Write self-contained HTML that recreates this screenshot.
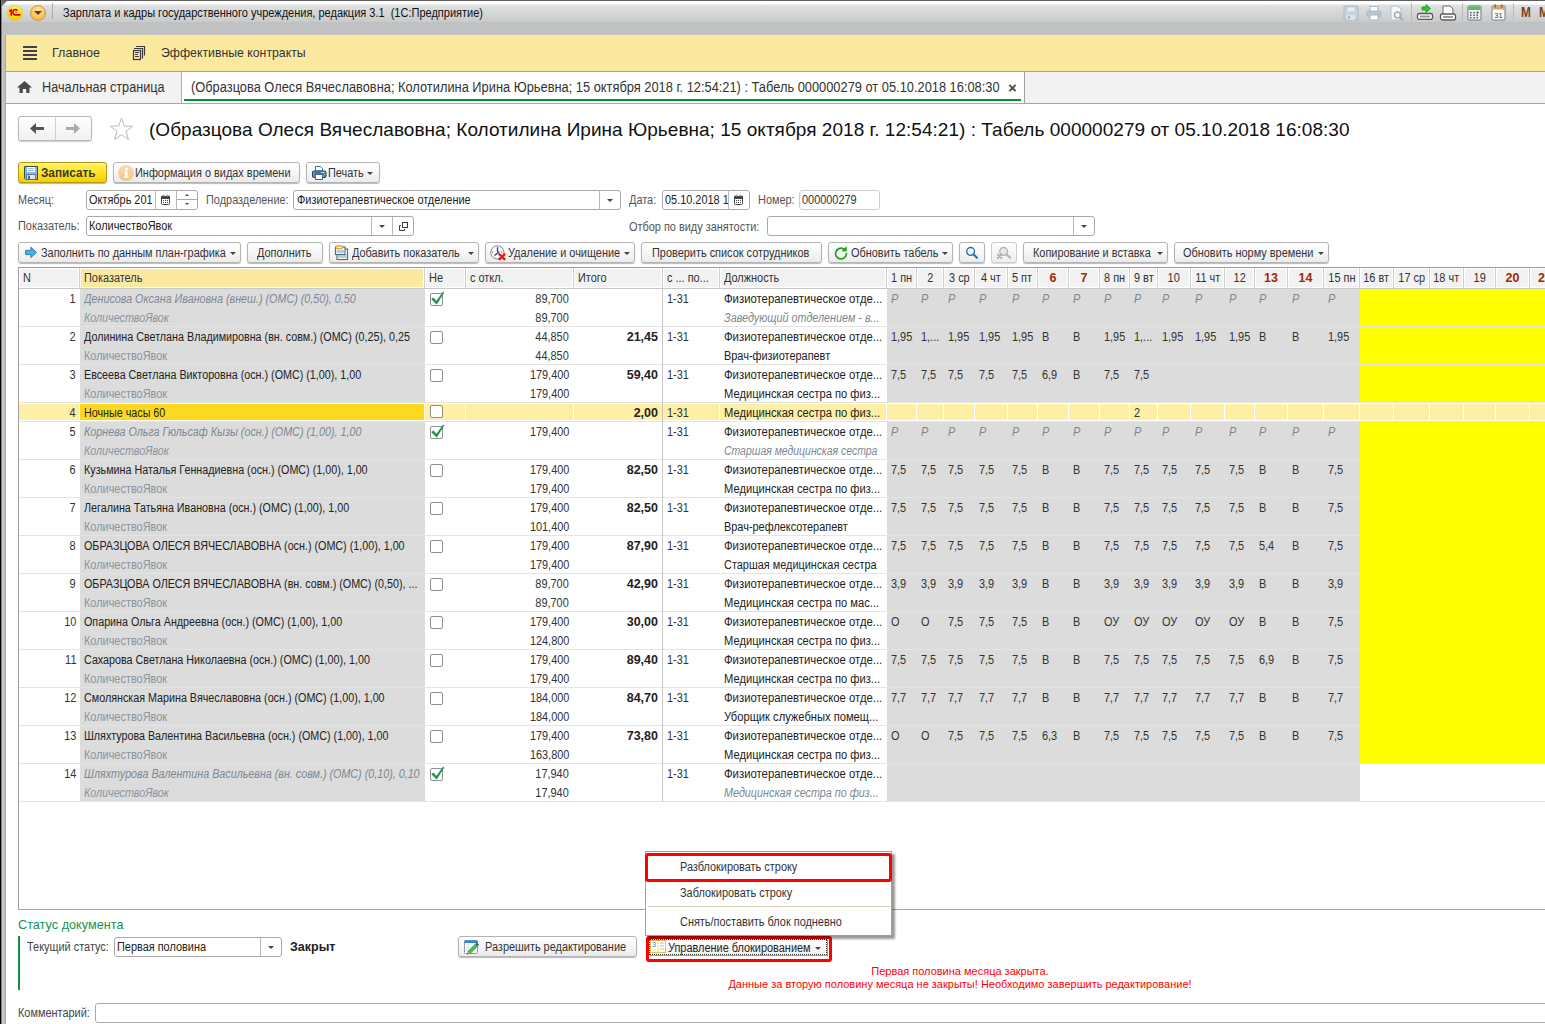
<!DOCTYPE html><html><head><meta charset="utf-8"><style>
*{margin:0;padding:0;box-sizing:border-box}
html,body{width:1545px;height:1024px;overflow:hidden;background:#fff}
body{position:relative;font-family:"Liberation Sans",sans-serif;font-size:12px;color:#333}
div{position:absolute}
.t{white-space:nowrap;line-height:19px;height:19px}
.btn{border:1px solid #b4b4b4;border-radius:3px;background:linear-gradient(#fff,#f6f6f6 50%,#ebebeb);box-shadow:0 1px 1px rgba(0,0,0,.28)}
.inp{border:1px solid #a9a9a9;border-radius:3px;background:#fff}
.vl{width:1px;background:#b8b8b8}
.dd{width:0;height:0;border-left:3px solid transparent;border-right:3px solid transparent;border-top:3px solid #444}
.cb{width:13px;height:13px;border:1.5px solid #8f8f8f;border-radius:2px;background:#fff}
</style></head><body>
<div style="left:0px;top:0px;width:1545px;height:22px;background:linear-gradient(#fff 0,#fff 3px,#e0e1e1 4px,#c9cacb 21px);border-top:1px solid #606060"></div>
<div style="left:0px;top:22px;width:1545px;height:13px;background:#c0c1c3"></div>
<svg style="position:absolute;left:7px;top:5px" width="16" height="16" viewBox="0 0 16 16"><defs><radialGradient id="lg" cx=".5" cy=".35" r=".6"><stop offset="0" stop-color="#fffbb0"/><stop offset=".7" stop-color="#ffe000"/><stop offset="1" stop-color="#f0c800"/></radialGradient></defs><circle cx="8" cy="8" r="7.6" fill="url(#lg)" stroke="#e8c848" stroke-width=".6"/><path d="M2.3 6.2 L4.2 5 L4.2 10.8" fill="none" stroke="#e00000" stroke-width="1.6"/><path d="M10.5 5.6 A2.6 2.6 0 1 0 8.6 9.8 L13.4 9.8" fill="none" stroke="#e00000" stroke-width="1.7"/><circle cx="9" cy="7.2" r=".8" fill="#e00000"/></svg>
<div style="left:30px;top:5px;width:16px;height:16px;border-radius:50%;background:radial-gradient(circle at 50% 30%,#ffe3a8,#ffb640 80%);border:1px solid #c89a40"></div>
<div style="left:34px;top:11px;width:0px;height:0px;border-left:4px solid transparent;border-right:4px solid transparent;border-top:4px solid #5a4020"></div>
<div style="left:52px;top:3px;width:1px;height:16px;background:#a8a8a8"></div>
<div class="t" style="left:63px;top:4px;text-align:left;color:#111"><span style="display:inline-block;transform:scaleX(0.917);transform-origin:0 0">Зарплата и кадры государственного учреждения, редакция 3.1&nbsp; (1С:Предприятие)</span></div>
<svg style="position:absolute;left:1343px;top:5px" width="16" height="16" viewBox="0 0 16 16"><rect x="1" y="1" width="14" height="14" rx="1" fill="#c9d3db" stroke="#a9b7c2"/><rect x="4" y="2" width="8" height="5" fill="#e8edf1" stroke="#b9c5ce" stroke-width=".6"/><rect x="4" y="10" width="8" height="5" fill="#dde4ea"/><rect x="5" y="11" width="2" height="3" fill="#a9b7c2"/></svg>
<svg style="position:absolute;left:1366px;top:5px" width="16" height="16" viewBox="0 0 16 16"><rect x="4" y="1.5" width="8" height="5" fill="#fff" stroke="#aab6c0"/><rect x="1" y="6" width="14" height="6" rx="2" fill="#bac6d0" stroke="#a4b2bd" stroke-width=".8"/><rect x="4" y="10" width="8" height="5" fill="#fff" stroke="#aab6c0"/></svg>
<svg style="position:absolute;left:1389px;top:5px" width="16" height="16" viewBox="0 0 16 16"><path d="M2 1 L9 1 L12 4 L12 15 L2 15 Z" fill="#f4f6f8" stroke="#b4c0ca"/><circle cx="8.5" cy="10" r="3" fill="none" stroke="#a0aeba" stroke-width="1.6"/><path d="M10.5 12 L14 15.5" stroke="#a0aeba" stroke-width="2"/></svg>
<div style="left:1411px;top:3px;width:1px;height:17px;background:#b8b8b8"></div>
<svg style="position:absolute;left:1416px;top:4px" width="18" height="16" viewBox="0 0 18 16"><path d="M6 3 L10 3 L10 0.5 L14.5 4.5 L10 8.5 L10 6 L6 6 Z" fill="#22d022" stroke="#109010" stroke-width=".7"/><rect x="1.5" y="9.5" width="15" height="6" rx="2" fill="#fff" stroke="#5a5a5a" stroke-width="1.3"/><rect x="4" y="11.5" width="10" height="2" fill="#9a9a9a"/></svg>
<svg style="position:absolute;left:1439px;top:5px" width="18" height="16" viewBox="0 0 18 16"><path d="M4 1 L11 1 L14 4 L14 10 L4 10 Z" fill="#fff" stroke="#6a6a6a"/><rect x="1.5" y="9" width="15" height="6" rx="2" fill="#fff" stroke="#5a5a5a" stroke-width="1.3"/><rect x="4" y="11" width="10" height="2" fill="#9a9a9a"/></svg>
<div style="left:1462px;top:3px;width:1px;height:17px;background:#b8b8b8"></div>
<svg style="position:absolute;left:1467px;top:5px" width="15" height="16" viewBox="0 0 15 16"><rect x="1" y="1" width="13" height="14" rx="1" fill="#f2f4f6" stroke="#6a7a88"/><rect x="1.5" y="1.5" width="12" height="3.5" fill="#58c058"/><g fill="#4a5a6a"><rect x="3" y="7" width="1.6" height="1.4"/><rect x="6.2" y="7" width="1.6" height="1.4"/><rect x="9.4" y="7" width="1.6" height="1.4"/><rect x="3" y="9.5" width="1.6" height="1.4"/><rect x="6.2" y="9.5" width="1.6" height="1.4"/><rect x="9.4" y="9.5" width="1.6" height="1.4"/><rect x="3" y="12" width="1.6" height="1.4"/><rect x="6.2" y="12" width="1.6" height="1.4"/><rect x="9.4" y="12" width="1.6" height="1.4"/></g><rect x="10" y="6.5" width="1.6" height="1.8" fill="#e02020"/></svg>
<svg style="position:absolute;left:1491px;top:4px" width="15" height="17" viewBox="0 0 15 17"><rect x="1" y="2" width="13" height="14" rx="1" fill="#fff" stroke="#6a7a88"/><rect x="1.5" y="2.5" width="12" height="3" fill="#e8a060"/><rect x="3.5" y="0.5" width="1.5" height="3" fill="#8a6a4a"/><rect x="10" y="0.5" width="1.5" height="3" fill="#8a6a4a"/><text x="7.5" y="14" font-family="Liberation Sans" font-size="7.5" text-anchor="middle" fill="#333">31</text></svg>
<div style="left:1513px;top:3px;width:1px;height:17px;background:#b8b8b8"></div>
<div style="left:1521px;top:4px;font:bold 14px 'Liberation Sans';color:#7a4520;transform:scaleX(.85);transform-origin:0 0">M</div>
<div style="left:1539px;top:4px;font:bold 14px 'Liberation Sans';color:#7a4520;transform:scaleX(.85);transform-origin:0 0">M</div>
<div style="left:0px;top:0px;width:1px;height:1024px;background:#000"></div>
<div style="left:1px;top:0px;width:1px;height:1024px;background:#808080"></div>
<div style="left:2px;top:35px;width:1px;height:989px;background:#cccccc"></div>
<div style="left:3px;top:35px;width:2px;height:989px;background:#bebebe"></div>
<div style="left:5px;top:35px;width:1px;height:989px;background:#ababab"></div>
<div style="left:2px;top:1px;width:5px;height:5px;background:#6a6a6a;clip-path:polygon(0 0,100% 0,0 100%)"></div>
<div style="left:6px;top:35px;width:1539px;height:37px;background:#fbe9a0;border-bottom:1px solid #c9a920"></div>
<div style="left:23px;top:46px;width:14px;height:2px;background:#404048"></div>
<div style="left:23px;top:50px;width:14px;height:2px;background:#404048"></div>
<div style="left:23px;top:54px;width:14px;height:2px;background:#404048"></div>
<div style="left:23px;top:58px;width:14px;height:2px;background:#404048"></div>
<div class="t" style="left:52px;top:43px;text-align:left;font-size:13.5px;color:#333"><span style="display:inline-block;transform:scaleX(0.93);transform-origin:0 0">Главное</span></div>
<svg style="position:absolute;left:132px;top:45px" width="14" height="16" viewBox="0 0 14 16"><rect x="1.5" y="5.5" width="7" height="9" fill="none" stroke="#3a3a40" stroke-width="1.2"/><path d="M2.5 3.5 H10.5 V13" fill="none" stroke="#3a3a40" stroke-width="1.2" stroke-linecap="round"/><path d="M4.5 1.5 H12.5 V10" fill="none" stroke="#3a3a40" stroke-width="1.2" stroke-linecap="round"/><path d="M3.5 7.5 H6.5 M3.5 9.5 H5.5 M3.5 11.5 H6.5" stroke="#3a3a40" stroke-width="1" stroke-linecap="round"/></svg>
<div class="t" style="left:161px;top:43px;text-align:left;font-size:13.5px;color:#333"><span style="display:inline-block;transform:scaleX(0.91);transform-origin:0 0">Эффективные контракты</span></div>
<div style="left:6px;top:72px;width:1539px;height:32px;background:#f2f2f2;border-bottom:1px solid #a6a6a6"></div>
<svg style="position:absolute;left:17px;top:80px" width="15" height="14" viewBox="0 0 15 14"><path d="M7.5 1 L15 7.5 L12.5 7.5 L12.5 13 L9.2 13 L9.2 9 L5.8 9 L5.8 13 L2.5 13 L2.5 7.5 L0 7.5 Z" fill="#4a4a4a"/></svg>
<div class="t" style="left:42px;top:78px;text-align:left;font-size:14px;color:#333"><span style="display:inline-block;transform:scaleX(0.905);transform-origin:0 0">Начальная страница</span></div>
<div style="left:181px;top:72px;width:844px;height:31px;background:#fff;border-left:1px solid #b0b0b0;border-right:1px solid #a0a0a0"></div>
<div style="left:184px;top:99px;width:837px;height:2px;background:#0a8c3a"></div>
<div class="t" style="left:191px;top:78px;text-align:left;font-size:14px;color:#333"><span style="display:inline-block;transform:scaleX(0.917);transform-origin:0 0">(Образцова Олеся Вячеславовна; Колотилина Ирина Юрьевна; 15 октября 2018 г. 12:54:21) : Табель 000000279 от 05.10.2018 16:08:30</span></div>
<div class="t" style="left:1008px;top:78px;text-align:left;font-size:15px;color:#444;font-weight:bold">×</div>
<div style="left:18px;top:116px;width:74px;height:25px;border:1px solid #b8b8b8;border-radius:3px;background:linear-gradient(#fff,#f0f0f0);box-shadow:0 1px 1px rgba(0,0,0,.2)"></div>
<div style="left:55px;top:117px;width:1px;height:23px;background:#cfcfcf"></div>
<svg style="position:absolute;left:30px;top:123px" width="14" height="11" viewBox="0 0 14 11"><path d="M0 5.5 L6 0 L6 4 L14 4 L14 7 L6 7 L6 11 Z" fill="#555"/></svg>
<svg style="position:absolute;left:66px;top:123px" width="14" height="11" viewBox="0 0 14 11"><path d="M14 5.5 L8 0 L8 4 L0 4 L0 7 L8 7 L8 11 Z" fill="#aaa"/></svg>
<svg style="position:absolute;left:109px;top:117px" width="25" height="24" viewBox="0 0 25 24"><path d="M12.5 1 L15.3 9 L23.7 9.2 L17 14.3 L19.4 22.5 L12.5 17.6 L5.6 22.5 L8 14.3 L1.3 9.2 L9.7 9 Z" fill="none" stroke="#b4bcc4" stroke-width="1"/></svg>
<div class="t" style="left:149px;top:118px;font-size:19px;line-height:24px;height:24px;color:#111;letter-spacing:0.03px">(Образцова Олеся Вячеславовна; Колотилина Ирина Юрьевна; 15 октября 2018 г. 12:54:21) : Табель 000000279 от 05.10.2018 16:08:30</div>
<div style="left:18px;top:162px;width:89px;height:21px;border:1px solid #b39a1e;border-radius:3px;background:linear-gradient(#fff36a,#ffe628 45%,#f2d000);box-shadow:0 1px 1px rgba(0,0,0,.3)"></div>
<svg style="position:absolute;left:24px;top:166px" width="14" height="14" viewBox="0 0 14 14"><path d="M.5 .5 H13.5 V13.5 H2 L.5 12 Z" fill="#8ab6ea" stroke="#2a4a6a" stroke-width="1"/><rect x="3" y="1" width="8" height="5" fill="#fff"/><path d="M4 2.6 H10 M4 4.5 H10" stroke="#8aa4c0" stroke-width=".8"/><rect x="2.5" y="8.5" width="9" height="5" fill="#dfe4e8" stroke="#4a6a8a" stroke-width=".8"/><rect x="4" y="9.5" width="2" height="4" fill="#3a70b0"/></svg>
<div class="t" style="left:41px;top:164px;text-align:left;font-weight:bold;color:#3a3a3a"><span style="display:inline-block;transform:scaleX(0.98);transform-origin:0 0">Записать</span></div>
<div class="btn" style="left:113px;top:162px;width:187px;height:21px;"></div>
<svg style="position:absolute;left:118px;top:165px" width="16" height="16" viewBox="0 0 16 16"><defs><linearGradient id="ig" x1="0" y1="0" x2="0" y2="1"><stop offset="0" stop-color="#f8dcb0"/><stop offset="1" stop-color="#ecc88e"/></linearGradient></defs><circle cx="8" cy="8" r="8" fill="url(#ig)"/><circle cx="8.4" cy="4" r="1.5" fill="#fff"/><path d="M6 6.5 H9.5 V11.8 H10.6 V13 H5.8 V11.8 H7 V7.6 H6 Z" fill="#fff"/></svg>
<div class="t" style="left:135px;top:164px;text-align:left;color:#333"><span style="display:inline-block;transform:scaleX(0.91);transform-origin:0 0">Информация о видах времени</span></div>
<div class="btn" style="left:306px;top:162px;width:74px;height:21px;"></div>
<svg style="position:absolute;left:311px;top:165px" width="16" height="16" viewBox="0 0 16 16"><path d="M4.5 1.5 H9.5 L11.5 3.5 V6 H4.5 Z" fill="#fff" stroke="#4a6a8a" stroke-width="1"/><rect x="1.5" y="6" width="13.5" height="6.5" rx="1.6" fill="#6a94c0" stroke="#1e4a78" stroke-width="1.1"/><path d="M3.5 8 H13" stroke="#2a4a6a" stroke-width=".9"/><circle cx="10.8" cy="7.4" r=".6" fill="#fff"/><circle cx="12.6" cy="7.4" r=".6" fill="#fff"/><rect x="4.5" y="9.5" width="7" height="5" fill="#fff" stroke="#4a6a8a" stroke-width="1"/></svg>
<div class="t" style="left:328px;top:164px;text-align:left;color:#333"><span style="display:inline-block;transform:scaleX(0.91);transform-origin:0 0">Печать</span></div>
<div class="dd" style="left:367px;top:172px;width:0px;height:0px;"></div>
<div class="t" style="left:18px;top:191px;text-align:left;color:#555"><span style="display:inline-block;transform:scaleX(0.91);transform-origin:0 0">Месяц:</span></div>
<div class="inp" style="left:86px;top:190px;width:112px;height:20px;"></div>
<div class="t" style="left:89px;top:191px;text-align:left;color:#222"><span style="display:inline-block;transform:scaleX(0.91);transform-origin:0 0">Октябрь 201</span></div>
<div class="vl" style="left:155px;top:191px;width:1px;height:18px;"></div>
<div class="vl" style="left:176px;top:191px;width:1px;height:18px;"></div>
<svg style="position:absolute;left:161px;top:194px" width="10" height="12" viewBox="0 0 10 12"><rect x=".5" y="2.5" width="8" height="8" rx="1" fill="#fff" stroke="#444" stroke-width="1"/><rect x="0" y="2" width="9" height="3" fill="#444"/><circle cx="2.5" cy="1.8" r=".8" fill="#fff" stroke="#444" stroke-width=".6"/><circle cx="6.5" cy="1.8" r=".8" fill="#fff" stroke="#444" stroke-width=".6"/><g fill="#444"><rect x="2" y="6" width="1" height="1"/><rect x="4" y="6" width="1" height="1"/><rect x="6" y="6" width="1" height="1"/><rect x="2" y="8" width="1" height="1"/><rect x="4" y="8" width="1" height="1"/><rect x="6" y="8" width="1" height="1"/></g></svg>
<div style="left:177px;top:199px;width:20px;height:1px;background:#a9a9a9"></div>
<div style="left:185px;top:194px;width:0px;height:0px;border-left:2.5px solid transparent;border-right:2.5px solid transparent;border-bottom:2px solid #444"></div>
<div style="left:185px;top:203px;width:0px;height:0px;border-left:2.5px solid transparent;border-right:2.5px solid transparent;border-top:2px solid #444"></div>
<div class="t" style="left:206px;top:191px;text-align:left;color:#555"><span style="display:inline-block;transform:scaleX(0.91);transform-origin:0 0">Подразделение:</span></div>
<div class="inp" style="left:293px;top:190px;width:328px;height:20px;"></div>
<div class="t" style="left:297px;top:191px;text-align:left;color:#222"><span style="display:inline-block;transform:scaleX(0.91);transform-origin:0 0">Физиотерапевтическое отделение</span></div>
<div class="vl" style="left:599px;top:191px;width:1px;height:18px;"></div>
<div class="dd" style="left:607px;top:199px;width:0px;height:0px;"></div>
<div class="t" style="left:629px;top:191px;text-align:left;color:#555"><span style="display:inline-block;transform:scaleX(0.91);transform-origin:0 0">Дата:</span></div>
<div class="inp" style="left:662px;top:190px;width:88px;height:20px;"></div>
<div class="t" style="left:665px;top:191px;text-align:left;color:#222"><span style="display:inline-block;transform:scaleX(0.91);transform-origin:0 0">05.10.2018 1</span></div>
<div class="vl" style="left:728px;top:191px;width:1px;height:18px;"></div>
<svg style="position:absolute;left:734px;top:194px" width="10" height="12" viewBox="0 0 10 12"><rect x=".5" y="2.5" width="8" height="8" rx="1" fill="#fff" stroke="#444" stroke-width="1"/><rect x="0" y="2" width="9" height="3" fill="#444"/><circle cx="2.5" cy="1.8" r=".8" fill="#fff" stroke="#444" stroke-width=".6"/><circle cx="6.5" cy="1.8" r=".8" fill="#fff" stroke="#444" stroke-width=".6"/><g fill="#444"><rect x="2" y="6" width="1" height="1"/><rect x="4" y="6" width="1" height="1"/><rect x="6" y="6" width="1" height="1"/><rect x="2" y="8" width="1" height="1"/><rect x="4" y="8" width="1" height="1"/><rect x="6" y="8" width="1" height="1"/></g></svg>
<div class="t" style="left:758px;top:191px;text-align:left;color:#555"><span style="display:inline-block;transform:scaleX(0.91);transform-origin:0 0">Номер:</span></div>
<div style="left:799px;top:190px;width:81px;height:20px;border:1px solid #cdcdcd;border-radius:3px;background:#fff"></div>
<div class="t" style="left:802px;top:191px;text-align:left;color:#333"><span style="display:inline-block;transform:scaleX(0.91);transform-origin:0 0">000000279</span></div>
<div class="t" style="left:18px;top:217px;text-align:left;color:#555"><span style="display:inline-block;transform:scaleX(0.91);transform-origin:0 0">Показатель:</span></div>
<div class="inp" style="left:86px;top:216px;width:328px;height:20px;"></div>
<div class="t" style="left:89px;top:217px;text-align:left;color:#222"><span style="display:inline-block;transform:scaleX(0.91);transform-origin:0 0">КоличествоЯвок</span></div>
<div class="vl" style="left:371px;top:217px;width:1px;height:18px;"></div>
<div class="vl" style="left:392px;top:217px;width:1px;height:18px;"></div>
<div class="dd" style="left:379px;top:225px;width:0px;height:0px;"></div>
<svg style="position:absolute;left:398px;top:221px" width="12" height="12" viewBox="0 0 12 12"><rect x="4.5" y="1.5" width="5" height="5" fill="none" stroke="#3a3a3a" stroke-width="1"/><path d="M3 4.5 H1.5 V9.5 H6.5 V8" fill="none" stroke="#3a3a3a" stroke-width="1"/></svg>
<div class="t" style="left:629px;top:218px;text-align:left;color:#555"><span style="display:inline-block;transform:scaleX(0.91);transform-origin:0 0">Отбор по виду занятости:</span></div>
<div class="inp" style="left:767px;top:216px;width:328px;height:20px;"></div>
<div class="vl" style="left:1073px;top:217px;width:1px;height:18px;"></div>
<div class="dd" style="left:1081px;top:225px;width:0px;height:0px;"></div>
<div class="btn" style="left:18px;top:242px;width:223px;height:21px;"></div>
<div class="t" style="left:41px;top:244px;text-align:left;color:#333"><span style="display:inline-block;transform:scaleX(0.91);transform-origin:0 0">Заполнить по данным план-графика</span></div>
<div class="dd" style="left:230px;top:252px;width:0px;height:0px;"></div>
<svg style="position:absolute;left:24px;top:246px" width="14" height="13" viewBox="0 0 14 13"><path d="M1.5 4.3 L6.9 4.3 L6.9 1.2 L12.5 6.4 L6.9 11.6 L6.9 8.6 L1.5 8.6 Z" fill="#45b0ea" stroke="#2a82bc" stroke-width="1" stroke-linejoin="round"/></svg>
<div class="btn" style="left:247px;top:242px;width:76px;height:21px;"></div>
<div class="t" style="left:257px;top:244px;text-align:left;color:#333"><span style="display:inline-block;transform:scaleX(0.91);transform-origin:0 0">Дополнить</span></div>
<div class="btn" style="left:329px;top:242px;width:150px;height:21px;"></div>
<div class="t" style="left:352px;top:244px;text-align:left;color:#333"><span style="display:inline-block;transform:scaleX(0.91);transform-origin:0 0">Добавить показатель</span></div>
<div class="dd" style="left:468px;top:252px;width:0px;height:0px;"></div>
<svg style="position:absolute;left:334px;top:245px" width="15" height="16" viewBox="0 0 15 16"><rect x="3" y="4" width="10.5" height="10.5" fill="#fff" stroke="#4a6a88" stroke-width="1.1"/><rect x="4" y="9" width="8.5" height="4" fill="#b8cadc"/><rect x="1.5" y="2" width="9.5" height="7.5" fill="#fff" stroke="#4a6a88" stroke-width="1.1"/><rect x="2.5" y="5" width="7.5" height="3" fill="#b8cadc"/><rect x="2" y=".8" width="6.5" height="3" rx="1" fill="#fff090" stroke="#c09020" stroke-width="1"/></svg>
<div class="btn" style="left:485px;top:242px;width:150px;height:21px;"></div>
<div class="t" style="left:508px;top:244px;text-align:left;color:#333"><span style="display:inline-block;transform:scaleX(0.91);transform-origin:0 0">Удаление и очищение</span></div>
<div class="dd" style="left:624px;top:252px;width:0px;height:0px;"></div>
<svg style="position:absolute;left:489px;top:244px" width="18" height="17" viewBox="0 0 18 17"><circle cx="8.3" cy="8.4" r="6.6" fill="#f8fafc" stroke="#7a8a98" stroke-width="1"/><path d="M8.5 3.2 V7.5 L9.8 8.3 L5.4 11.6" fill="none" stroke="#1a4a88" stroke-width="1.3" stroke-linejoin="round"/><circle cx="3.4" cy="8.2" r=".7" fill="#f06060"/><circle cx="12.6" cy="8" r=".7" fill="#f06060"/><path d="M10.6 10.4 L15.4 15.2 M15.4 10.4 L10.6 15.2" stroke="#e81818" stroke-width="2.4" stroke-linecap="round"/></svg>
<div class="btn" style="left:641px;top:242px;width:181px;height:21px;"></div>
<div class="t" style="left:652px;top:244px;text-align:left;color:#333"><span style="display:inline-block;transform:scaleX(0.91);transform-origin:0 0">Проверить список сотрудников</span></div>
<div class="btn" style="left:828px;top:242px;width:125px;height:21px;"></div>
<div class="t" style="left:851px;top:244px;text-align:left;color:#333"><span style="display:inline-block;transform:scaleX(0.91);transform-origin:0 0">Обновить табель</span></div>
<div class="dd" style="left:942px;top:252px;width:0px;height:0px;"></div>
<svg style="position:absolute;left:834px;top:246px" width="14" height="14" viewBox="0 0 14 14"><path d="M12.4 7.6 A5.4 5.4 0 1 1 9.3 2.7" fill="none" stroke="#22a022" stroke-width="1.7" stroke-linecap="round"/><path d="M8 5 L12.3 5 L12.3 0.8 Z" fill="#22a022" stroke="#22a022" stroke-width=".7" stroke-linejoin="round"/></svg>
<div class="btn" style="left:959px;top:242px;width:26px;height:21px;"></div>
<svg style="position:absolute;left:964px;top:245px" width="16" height="16" viewBox="0 0 16 16"><circle cx="6.6" cy="6.4" r="3.9" fill="none" stroke="#2a70a8" stroke-width="1.4"/><path d="M9.4 9.2 L13 12.8" stroke="#2a70a8" stroke-width="2.1" stroke-linecap="round"/></svg>
<div style="left:991px;top:242px;width:26px;height:21px;border:1px solid #cdcdcd;border-radius:3px;background:linear-gradient(#fff,#f6f6f6 50%,#efefef);box-shadow:0 1px 1px rgba(0,0,0,.15)"></div>
<svg style="position:absolute;left:997px;top:245px" width="16" height="16" viewBox="0 0 16 16"><circle cx="6.6" cy="6.4" r="3.9" fill="#e8e8e8" stroke="#a8b8c4" stroke-width="1.4"/><path d="M9.4 9.2 L13 12.8" stroke="#a8b8c4" stroke-width="2.1" stroke-linecap="round"/><path d="M.6 9.4 L4.4 13.2 M4.4 9.4 L.6 13.2" stroke="#c4a4a4" stroke-width="1.8" stroke-linecap="round"/></svg>
<div class="btn" style="left:1023px;top:242px;width:145px;height:21px;"></div>
<div class="t" style="left:1033px;top:244px;text-align:left;color:#333"><span style="display:inline-block;transform:scaleX(0.91);transform-origin:0 0">Копирование и вставка</span></div>
<div class="dd" style="left:1157px;top:252px;width:0px;height:0px;"></div>
<div class="btn" style="left:1174px;top:242px;width:155px;height:21px;"></div>
<div class="t" style="left:1183px;top:244px;text-align:left;color:#333"><span style="display:inline-block;transform:scaleX(0.91);transform-origin:0 0">Обновить норму времени</span></div>
<div class="dd" style="left:1318px;top:252px;width:0px;height:0px;"></div>
<div style="left:18px;top:267px;width:1600px;height:1px;background:#9a9a9a"></div>
<div style="left:18px;top:267px;width:1px;height:643px;background:#a0a0a0"></div>
<div style="left:18px;top:909px;width:1600px;height:1px;background:#a6a6a6"></div>
<div style="left:19px;top:288px;width:1600px;height:1px;background:#c8c8c8"></div>
<div style="left:20px;top:269px;width:58px;height:18px;background:#f2f2f2"></div>
<div class="t" style="left:23px;top:269px;text-align:left;color:#333"><span style="display:inline-block;transform:scaleX(0.91);transform-origin:0 0">N</span></div>
<div style="left:81px;top:269px;width:342px;height:18px;background:#fbe9a0"></div>
<div style="left:79px;top:268px;width:1px;height:20px;background:#cfcfcf"></div>
<div class="t" style="left:84px;top:269px;text-align:left;color:#333"><span style="display:inline-block;transform:scaleX(0.91);transform-origin:0 0">Показатель</span></div>
<div style="left:426px;top:269px;width:38px;height:18px;background:#f2f2f2"></div>
<div style="left:424px;top:268px;width:1px;height:20px;background:#cfcfcf"></div>
<div class="t" style="left:429px;top:269px;text-align:left;color:#333"><span style="display:inline-block;transform:scaleX(0.91);transform-origin:0 0">Не</span></div>
<div style="left:467px;top:269px;width:105px;height:18px;background:#f2f2f2"></div>
<div style="left:465px;top:268px;width:1px;height:20px;background:#cfcfcf"></div>
<div class="t" style="left:470px;top:269px;text-align:left;color:#333"><span style="display:inline-block;transform:scaleX(0.91);transform-origin:0 0">с откл.</span></div>
<div style="left:575px;top:269px;width:86px;height:18px;background:#f2f2f2"></div>
<div style="left:573px;top:268px;width:1px;height:20px;background:#cfcfcf"></div>
<div class="t" style="left:578px;top:269px;text-align:left;color:#333"><span style="display:inline-block;transform:scaleX(0.91);transform-origin:0 0">Итого</span></div>
<div style="left:664px;top:269px;width:54px;height:18px;background:#f2f2f2"></div>
<div style="left:662px;top:268px;width:1px;height:20px;background:#cfcfcf"></div>
<div class="t" style="left:667px;top:269px;text-align:left;color:#333"><span style="display:inline-block;transform:scaleX(0.91);transform-origin:0 0">с ... по...</span></div>
<div style="left:721px;top:269px;width:164px;height:18px;background:#f2f2f2"></div>
<div style="left:719px;top:268px;width:1px;height:20px;background:#cfcfcf"></div>
<div class="t" style="left:724px;top:269px;text-align:left;color:#333"><span style="display:inline-block;transform:scaleX(0.91);transform-origin:0 0">Должность</span></div>
<div style="left:888px;top:269px;width:27px;height:18px;background:#f2f2f2"></div>
<div style="left:886px;top:268px;width:1px;height:20px;background:#cfcfcf"></div>
<div class="t" style="left:887px;top:269px;width:29px;text-align:center;color:#333"><span style="display:inline-block;transform:scaleX(0.91);transform-origin:50% 0">1 пн</span></div>
<div style="left:918px;top:269px;width:24px;height:18px;background:#f2f2f2"></div>
<div style="left:916px;top:268px;width:1px;height:20px;background:#cfcfcf"></div>
<div class="t" style="left:917px;top:269px;width:26px;text-align:center;color:#333"><span style="display:inline-block;transform:scaleX(0.91);transform-origin:50% 0">2</span></div>
<div style="left:945px;top:269px;width:28px;height:18px;background:#f2f2f2"></div>
<div style="left:943px;top:268px;width:1px;height:20px;background:#cfcfcf"></div>
<div class="t" style="left:944px;top:269px;width:30px;text-align:center;color:#333"><span style="display:inline-block;transform:scaleX(0.91);transform-origin:50% 0">3 ср</span></div>
<div style="left:976px;top:269px;width:30px;height:18px;background:#f2f2f2"></div>
<div style="left:974px;top:268px;width:1px;height:20px;background:#cfcfcf"></div>
<div class="t" style="left:975px;top:269px;width:32px;text-align:center;color:#333"><span style="display:inline-block;transform:scaleX(0.91);transform-origin:50% 0">4 чт</span></div>
<div style="left:1009px;top:269px;width:27px;height:18px;background:#f2f2f2"></div>
<div style="left:1007px;top:268px;width:1px;height:20px;background:#cfcfcf"></div>
<div class="t" style="left:1008px;top:269px;width:29px;text-align:center;color:#333"><span style="display:inline-block;transform:scaleX(0.91);transform-origin:50% 0">5 пт</span></div>
<div style="left:1039px;top:269px;width:28px;height:18px;background:#f2f2f2"></div>
<div style="left:1037px;top:268px;width:1px;height:20px;background:#cfcfcf"></div>
<div class="t" style="left:1038px;top:269px;width:30px;text-align:center;color:#a02a00;font-weight:bold;font-size:12.5px">6</div>
<div style="left:1070px;top:269px;width:28px;height:18px;background:#f2f2f2"></div>
<div style="left:1068px;top:268px;width:1px;height:20px;background:#cfcfcf"></div>
<div class="t" style="left:1069px;top:269px;width:30px;text-align:center;color:#a02a00;font-weight:bold;font-size:12.5px">7</div>
<div style="left:1101px;top:269px;width:27px;height:18px;background:#f2f2f2"></div>
<div style="left:1099px;top:268px;width:1px;height:20px;background:#cfcfcf"></div>
<div class="t" style="left:1100px;top:269px;width:29px;text-align:center;color:#333"><span style="display:inline-block;transform:scaleX(0.91);transform-origin:50% 0">8 пн</span></div>
<div style="left:1131px;top:269px;width:25px;height:18px;background:#f2f2f2"></div>
<div style="left:1129px;top:268px;width:1px;height:20px;background:#cfcfcf"></div>
<div class="t" style="left:1130px;top:269px;width:27px;text-align:center;color:#333"><span style="display:inline-block;transform:scaleX(0.91);transform-origin:50% 0">9 вт</span></div>
<div style="left:1159px;top:269px;width:30px;height:18px;background:#f2f2f2"></div>
<div style="left:1157px;top:268px;width:1px;height:20px;background:#cfcfcf"></div>
<div class="t" style="left:1158px;top:269px;width:32px;text-align:center;color:#333"><span style="display:inline-block;transform:scaleX(0.91);transform-origin:50% 0">10</span></div>
<div style="left:1192px;top:269px;width:31px;height:18px;background:#f2f2f2"></div>
<div style="left:1190px;top:268px;width:1px;height:20px;background:#cfcfcf"></div>
<div class="t" style="left:1191px;top:269px;width:33px;text-align:center;color:#333"><span style="display:inline-block;transform:scaleX(0.91);transform-origin:50% 0">11 чт</span></div>
<div style="left:1226px;top:269px;width:27px;height:18px;background:#f2f2f2"></div>
<div style="left:1224px;top:268px;width:1px;height:20px;background:#cfcfcf"></div>
<div class="t" style="left:1225px;top:269px;width:29px;text-align:center;color:#333"><span style="display:inline-block;transform:scaleX(0.91);transform-origin:50% 0">12</span></div>
<div style="left:1256px;top:269px;width:30px;height:18px;background:#f2f2f2"></div>
<div style="left:1254px;top:268px;width:1px;height:20px;background:#cfcfcf"></div>
<div class="t" style="left:1255px;top:269px;width:32px;text-align:center;color:#a02a00;font-weight:bold;font-size:12.5px">13</div>
<div style="left:1289px;top:269px;width:33px;height:18px;background:#f2f2f2"></div>
<div style="left:1287px;top:268px;width:1px;height:20px;background:#cfcfcf"></div>
<div class="t" style="left:1288px;top:269px;width:35px;text-align:center;color:#a02a00;font-weight:bold;font-size:12.5px">14</div>
<div style="left:1325px;top:269px;width:33px;height:18px;background:#f2f2f2"></div>
<div style="left:1323px;top:268px;width:1px;height:20px;background:#cfcfcf"></div>
<div class="t" style="left:1324px;top:269px;width:35px;text-align:center;color:#333"><span style="display:inline-block;transform:scaleX(0.91);transform-origin:50% 0">15 пн</span></div>
<div style="left:1361px;top:269px;width:31px;height:18px;background:#f2f2f2"></div>
<div style="left:1359px;top:268px;width:1px;height:20px;background:#cfcfcf"></div>
<div class="t" style="left:1360px;top:269px;width:33px;text-align:center;color:#333"><span style="display:inline-block;transform:scaleX(0.91);transform-origin:50% 0">16 вт</span></div>
<div style="left:1395px;top:269px;width:33px;height:18px;background:#f2f2f2"></div>
<div style="left:1393px;top:268px;width:1px;height:20px;background:#cfcfcf"></div>
<div class="t" style="left:1394px;top:269px;width:35px;text-align:center;color:#333"><span style="display:inline-block;transform:scaleX(0.91);transform-origin:50% 0">17 ср</span></div>
<div style="left:1431px;top:269px;width:31px;height:18px;background:#f2f2f2"></div>
<div style="left:1429px;top:268px;width:1px;height:20px;background:#cfcfcf"></div>
<div class="t" style="left:1430px;top:269px;width:33px;text-align:center;color:#333"><span style="display:inline-block;transform:scaleX(0.91);transform-origin:50% 0">18 чт</span></div>
<div style="left:1465px;top:269px;width:29px;height:18px;background:#f2f2f2"></div>
<div style="left:1463px;top:268px;width:1px;height:20px;background:#cfcfcf"></div>
<div class="t" style="left:1464px;top:269px;width:31px;text-align:center;color:#333"><span style="display:inline-block;transform:scaleX(0.91);transform-origin:50% 0">19</span></div>
<div style="left:1497px;top:269px;width:31px;height:18px;background:#f2f2f2"></div>
<div style="left:1495px;top:268px;width:1px;height:20px;background:#cfcfcf"></div>
<div class="t" style="left:1496px;top:269px;width:33px;text-align:center;color:#a02a00;font-weight:bold;font-size:12.5px">20</div>
<div style="left:1531px;top:269px;width:67px;height:18px;background:#f2f2f2"></div>
<div style="left:1529px;top:268px;width:1px;height:20px;background:#cfcfcf"></div>
<div class="t" style="left:1538px;top:269px;text-align:left;color:#a02a00;font-weight:bold;font-size:12.5px">21</div>
<div style="left:80px;top:289px;width:345px;height:37px;background:#dcdcdc"></div>
<div style="left:887px;top:289px;width:473px;height:37px;background:#dcdcdc"></div>
<div style="left:1360px;top:289px;width:300px;height:37px;background:#ffff00"></div>
<div style="left:19px;top:326px;width:1600px;height:1px;background:#e4e4e4"></div>
<div class="t" style="left:19px;top:290px;width:57px;text-align:right;color:#333"><span style="display:inline-block;transform:scaleX(0.91);transform-origin:100% 0">1</span></div>
<div class="t" style="left:84px;top:290px;width:338px;overflow:hidden;text-align:left;color:#7c8894;font-style:italic"><span style="display:inline-block;transform:scaleX(0.895);transform-origin:0 0">Денисова Оксана Ивановна (внеш.) (ОМС) (0,50), 0,50</span></div>
<div class="t" style="left:84px;top:309px;text-align:left;color:#8a949e;font-style:italic"><span style="display:inline-block;transform:scaleX(0.895);transform-origin:0 0">КоличествоЯвок</span></div>
<div class="cb" style="left:430px;top:293px;width:13px;height:13px;"></div>
<svg style="position:absolute;left:430px;top:291px" width="15" height="14" viewBox="0 0 15 14"><path d="M1.6 8.2 L3.4 6.8 L6.4 10.2 L13.1 0.9 L14 1.5 L6.7 13.2 Z" fill="#17914a" stroke="#17914a" stroke-width=".5" stroke-linejoin="round"/></svg>
<div class="t" style="left:470px;top:290px;width:99px;text-align:right;color:#333"><span style="display:inline-block;transform:scaleX(0.91);transform-origin:100% 0">89,700</span></div>
<div class="t" style="left:470px;top:309px;width:99px;text-align:right;color:#333"><span style="display:inline-block;transform:scaleX(0.91);transform-origin:100% 0">89,700</span></div>
<div class="t" style="left:667px;top:290px;text-align:left;color:#333"><span style="display:inline-block;transform:scaleX(0.91);transform-origin:0 0">1-31</span></div>
<div class="t" style="left:724px;top:290px;text-align:left;color:#222"><span style="display:inline-block;transform:scaleX(0.945);transform-origin:0 0">Физиотерапевтическое отде...</span></div>
<div class="t" style="left:724px;top:309px;width:160px;overflow:hidden;text-align:left;color:#7c8894;font-style:italic"><span style="display:inline-block;transform:scaleX(0.9);transform-origin:0 0">Заведующий отделением - в...</span></div>
<div class="t" style="left:891px;top:290px;text-align:left;color:#7c8894;font-style:italic"><span style="display:inline-block;transform:scaleX(0.91);transform-origin:0 0">P</span></div>
<div class="t" style="left:921px;top:290px;text-align:left;color:#7c8894;font-style:italic"><span style="display:inline-block;transform:scaleX(0.91);transform-origin:0 0">P</span></div>
<div class="t" style="left:948px;top:290px;text-align:left;color:#7c8894;font-style:italic"><span style="display:inline-block;transform:scaleX(0.91);transform-origin:0 0">P</span></div>
<div class="t" style="left:979px;top:290px;text-align:left;color:#7c8894;font-style:italic"><span style="display:inline-block;transform:scaleX(0.91);transform-origin:0 0">P</span></div>
<div class="t" style="left:1012px;top:290px;text-align:left;color:#7c8894;font-style:italic"><span style="display:inline-block;transform:scaleX(0.91);transform-origin:0 0">P</span></div>
<div class="t" style="left:1042px;top:290px;text-align:left;color:#7c8894;font-style:italic"><span style="display:inline-block;transform:scaleX(0.91);transform-origin:0 0">P</span></div>
<div class="t" style="left:1073px;top:290px;text-align:left;color:#7c8894;font-style:italic"><span style="display:inline-block;transform:scaleX(0.91);transform-origin:0 0">P</span></div>
<div class="t" style="left:1104px;top:290px;text-align:left;color:#7c8894;font-style:italic"><span style="display:inline-block;transform:scaleX(0.91);transform-origin:0 0">P</span></div>
<div class="t" style="left:1134px;top:290px;text-align:left;color:#7c8894;font-style:italic"><span style="display:inline-block;transform:scaleX(0.91);transform-origin:0 0">P</span></div>
<div class="t" style="left:1162px;top:290px;text-align:left;color:#7c8894;font-style:italic"><span style="display:inline-block;transform:scaleX(0.91);transform-origin:0 0">P</span></div>
<div class="t" style="left:1195px;top:290px;text-align:left;color:#7c8894;font-style:italic"><span style="display:inline-block;transform:scaleX(0.91);transform-origin:0 0">P</span></div>
<div class="t" style="left:1229px;top:290px;text-align:left;color:#7c8894;font-style:italic"><span style="display:inline-block;transform:scaleX(0.91);transform-origin:0 0">P</span></div>
<div class="t" style="left:1259px;top:290px;text-align:left;color:#7c8894;font-style:italic"><span style="display:inline-block;transform:scaleX(0.91);transform-origin:0 0">P</span></div>
<div class="t" style="left:1292px;top:290px;text-align:left;color:#7c8894;font-style:italic"><span style="display:inline-block;transform:scaleX(0.91);transform-origin:0 0">P</span></div>
<div class="t" style="left:1328px;top:290px;text-align:left;color:#7c8894;font-style:italic"><span style="display:inline-block;transform:scaleX(0.91);transform-origin:0 0">P</span></div>
<div style="left:80px;top:327px;width:345px;height:37px;background:#dcdcdc"></div>
<div style="left:887px;top:327px;width:473px;height:37px;background:#dcdcdc"></div>
<div style="left:1360px;top:327px;width:300px;height:37px;background:#ffff00"></div>
<div style="left:19px;top:364px;width:1600px;height:1px;background:#e4e4e4"></div>
<div class="t" style="left:19px;top:328px;width:57px;text-align:right;color:#333"><span style="display:inline-block;transform:scaleX(0.91);transform-origin:100% 0">2</span></div>
<div class="t" style="left:84px;top:328px;width:338px;overflow:hidden;text-align:left;color:#222"><span style="display:inline-block;transform:scaleX(0.895);transform-origin:0 0">Долинина Светлана Владимировна (вн. совм.) (ОМС) (0,25), 0,25</span></div>
<div class="t" style="left:84px;top:347px;text-align:left;color:#8a949e"><span style="display:inline-block;transform:scaleX(0.91);transform-origin:0 0">КоличествоЯвок</span></div>
<div class="cb" style="left:430px;top:331px;width:13px;height:13px;"></div>
<div class="t" style="left:470px;top:328px;width:99px;text-align:right;color:#333"><span style="display:inline-block;transform:scaleX(0.91);transform-origin:100% 0">44,850</span></div>
<div class="t" style="left:470px;top:347px;width:99px;text-align:right;color:#333"><span style="display:inline-block;transform:scaleX(0.91);transform-origin:100% 0">44,850</span></div>
<div class="t" style="left:575px;top:328px;width:83px;text-align:right;color:#222;font-weight:bold;font-size:12.5px">21,45</div>
<div class="t" style="left:667px;top:328px;text-align:left;color:#333"><span style="display:inline-block;transform:scaleX(0.91);transform-origin:0 0">1-31</span></div>
<div class="t" style="left:724px;top:328px;text-align:left;color:#222"><span style="display:inline-block;transform:scaleX(0.945);transform-origin:0 0">Физиотерапевтическое отде...</span></div>
<div class="t" style="left:724px;top:347px;width:160px;overflow:hidden;text-align:left;color:#222"><span style="display:inline-block;transform:scaleX(0.91);transform-origin:0 0">Врач-физиотерапевт</span></div>
<div class="t" style="left:891px;top:328px;text-align:left;color:#333"><span style="display:inline-block;transform:scaleX(0.91);transform-origin:0 0">1,95</span></div>
<div class="t" style="left:921px;top:328px;text-align:left;color:#333"><span style="display:inline-block;transform:scaleX(0.91);transform-origin:0 0">1,...</span></div>
<div class="t" style="left:948px;top:328px;text-align:left;color:#333"><span style="display:inline-block;transform:scaleX(0.91);transform-origin:0 0">1,95</span></div>
<div class="t" style="left:979px;top:328px;text-align:left;color:#333"><span style="display:inline-block;transform:scaleX(0.91);transform-origin:0 0">1,95</span></div>
<div class="t" style="left:1012px;top:328px;text-align:left;color:#333"><span style="display:inline-block;transform:scaleX(0.91);transform-origin:0 0">1,95</span></div>
<div class="t" style="left:1042px;top:328px;text-align:left;color:#333"><span style="display:inline-block;transform:scaleX(0.91);transform-origin:0 0">В</span></div>
<div class="t" style="left:1073px;top:328px;text-align:left;color:#333"><span style="display:inline-block;transform:scaleX(0.91);transform-origin:0 0">В</span></div>
<div class="t" style="left:1104px;top:328px;text-align:left;color:#333"><span style="display:inline-block;transform:scaleX(0.91);transform-origin:0 0">1,95</span></div>
<div class="t" style="left:1134px;top:328px;text-align:left;color:#333"><span style="display:inline-block;transform:scaleX(0.91);transform-origin:0 0">1,...</span></div>
<div class="t" style="left:1162px;top:328px;text-align:left;color:#333"><span style="display:inline-block;transform:scaleX(0.91);transform-origin:0 0">1,95</span></div>
<div class="t" style="left:1195px;top:328px;text-align:left;color:#333"><span style="display:inline-block;transform:scaleX(0.91);transform-origin:0 0">1,95</span></div>
<div class="t" style="left:1229px;top:328px;text-align:left;color:#333"><span style="display:inline-block;transform:scaleX(0.91);transform-origin:0 0">1,95</span></div>
<div class="t" style="left:1259px;top:328px;text-align:left;color:#333"><span style="display:inline-block;transform:scaleX(0.91);transform-origin:0 0">В</span></div>
<div class="t" style="left:1292px;top:328px;text-align:left;color:#333"><span style="display:inline-block;transform:scaleX(0.91);transform-origin:0 0">В</span></div>
<div class="t" style="left:1328px;top:328px;text-align:left;color:#333"><span style="display:inline-block;transform:scaleX(0.91);transform-origin:0 0">1,95</span></div>
<div style="left:80px;top:365px;width:345px;height:37px;background:#dcdcdc"></div>
<div style="left:887px;top:365px;width:473px;height:37px;background:#dcdcdc"></div>
<div style="left:1360px;top:365px;width:300px;height:37px;background:#ffff00"></div>
<div style="left:19px;top:402px;width:1600px;height:1px;background:#e4e4e4"></div>
<div class="t" style="left:19px;top:366px;width:57px;text-align:right;color:#333"><span style="display:inline-block;transform:scaleX(0.91);transform-origin:100% 0">3</span></div>
<div class="t" style="left:84px;top:366px;width:338px;overflow:hidden;text-align:left;color:#222"><span style="display:inline-block;transform:scaleX(0.895);transform-origin:0 0">Евсеева Светлана Викторовна (осн.) (ОМС) (1,00), 1,00</span></div>
<div class="t" style="left:84px;top:385px;text-align:left;color:#8a949e"><span style="display:inline-block;transform:scaleX(0.91);transform-origin:0 0">КоличествоЯвок</span></div>
<div class="cb" style="left:430px;top:369px;width:13px;height:13px;"></div>
<div class="t" style="left:470px;top:366px;width:99px;text-align:right;color:#333"><span style="display:inline-block;transform:scaleX(0.91);transform-origin:100% 0">179,400</span></div>
<div class="t" style="left:470px;top:385px;width:99px;text-align:right;color:#333"><span style="display:inline-block;transform:scaleX(0.91);transform-origin:100% 0">179,400</span></div>
<div class="t" style="left:575px;top:366px;width:83px;text-align:right;color:#222;font-weight:bold;font-size:12.5px">59,40</div>
<div class="t" style="left:667px;top:366px;text-align:left;color:#333"><span style="display:inline-block;transform:scaleX(0.91);transform-origin:0 0">1-31</span></div>
<div class="t" style="left:724px;top:366px;text-align:left;color:#222"><span style="display:inline-block;transform:scaleX(0.945);transform-origin:0 0">Физиотерапевтическое отде...</span></div>
<div class="t" style="left:724px;top:385px;width:160px;overflow:hidden;text-align:left;color:#222"><span style="display:inline-block;transform:scaleX(0.93);transform-origin:0 0">Медицинская сестра по физ...</span></div>
<div class="t" style="left:891px;top:366px;text-align:left;color:#333"><span style="display:inline-block;transform:scaleX(0.91);transform-origin:0 0">7,5</span></div>
<div class="t" style="left:921px;top:366px;text-align:left;color:#333"><span style="display:inline-block;transform:scaleX(0.91);transform-origin:0 0">7,5</span></div>
<div class="t" style="left:948px;top:366px;text-align:left;color:#333"><span style="display:inline-block;transform:scaleX(0.91);transform-origin:0 0">7,5</span></div>
<div class="t" style="left:979px;top:366px;text-align:left;color:#333"><span style="display:inline-block;transform:scaleX(0.91);transform-origin:0 0">7,5</span></div>
<div class="t" style="left:1012px;top:366px;text-align:left;color:#333"><span style="display:inline-block;transform:scaleX(0.91);transform-origin:0 0">7,5</span></div>
<div class="t" style="left:1042px;top:366px;text-align:left;color:#333"><span style="display:inline-block;transform:scaleX(0.91);transform-origin:0 0">6,9</span></div>
<div class="t" style="left:1073px;top:366px;text-align:left;color:#333"><span style="display:inline-block;transform:scaleX(0.91);transform-origin:0 0">В</span></div>
<div class="t" style="left:1104px;top:366px;text-align:left;color:#333"><span style="display:inline-block;transform:scaleX(0.91);transform-origin:0 0">7,5</span></div>
<div class="t" style="left:1134px;top:366px;text-align:left;color:#333"><span style="display:inline-block;transform:scaleX(0.91);transform-origin:0 0">7,5</span></div>
<div style="left:19px;top:404px;width:60px;height:16px;background:#fdf0a6"></div>
<div style="left:80px;top:404px;width:344px;height:16px;background:#fcd91f"></div>
<div style="left:425px;top:404px;width:40px;height:16px;background:#fdf0a6"></div>
<div style="left:466px;top:404px;width:107px;height:16px;background:#fdf0a6"></div>
<div style="left:574px;top:404px;width:88px;height:16px;background:#fdf0a6"></div>
<div style="left:663px;top:404px;width:56px;height:16px;background:#fdf0a6"></div>
<div style="left:720px;top:404px;width:166px;height:16px;background:#fdf0a6"></div>
<div style="left:887px;top:404px;width:29px;height:16px;background:#fdf0a6"></div>
<div style="left:917px;top:404px;width:26px;height:16px;background:#fdf0a6"></div>
<div style="left:944px;top:404px;width:30px;height:16px;background:#fdf0a6"></div>
<div style="left:975px;top:404px;width:32px;height:16px;background:#fdf0a6"></div>
<div style="left:1008px;top:404px;width:29px;height:16px;background:#fdf0a6"></div>
<div style="left:1038px;top:404px;width:30px;height:16px;background:#fdf0a6"></div>
<div style="left:1069px;top:404px;width:30px;height:16px;background:#fdf0a6"></div>
<div style="left:1100px;top:404px;width:29px;height:16px;background:#fdf0a6"></div>
<div style="left:1130px;top:404px;width:27px;height:16px;background:#fdf0a6"></div>
<div style="left:1158px;top:404px;width:32px;height:16px;background:#fdf0a6"></div>
<div style="left:1191px;top:404px;width:33px;height:16px;background:#fdf0a6"></div>
<div style="left:1225px;top:404px;width:29px;height:16px;background:#fdf0a6"></div>
<div style="left:1255px;top:404px;width:32px;height:16px;background:#fdf0a6"></div>
<div style="left:1288px;top:404px;width:35px;height:16px;background:#fdf0a6"></div>
<div style="left:1324px;top:404px;width:35px;height:16px;background:#fdf0a6"></div>
<div style="left:1360px;top:404px;width:33px;height:16px;background:#fdf0a6"></div>
<div style="left:1394px;top:404px;width:35px;height:16px;background:#fdf0a6"></div>
<div style="left:1430px;top:404px;width:33px;height:16px;background:#fdf0a6"></div>
<div style="left:1464px;top:404px;width:31px;height:16px;background:#fdf0a6"></div>
<div style="left:1496px;top:404px;width:33px;height:16px;background:#fdf0a6"></div>
<div style="left:1530px;top:404px;width:69px;height:16px;background:#fdf0a6"></div>
<div style="left:19px;top:421px;width:1600px;height:1px;background:#e4e4e4"></div>
<div class="t" style="left:19px;top:404px;width:57px;text-align:right;color:#333"><span style="display:inline-block;transform:scaleX(0.91);transform-origin:100% 0">4</span></div>
<div class="t" style="left:84px;top:404px;width:338px;overflow:hidden;text-align:left;color:#222"><span style="display:inline-block;transform:scaleX(0.895);transform-origin:0 0">Ночные часы 60</span></div>
<div class="cb" style="left:430px;top:405px;width:13px;height:13px;"></div>
<div class="t" style="left:575px;top:404px;width:83px;text-align:right;color:#222;font-weight:bold;font-size:12.5px">2,00</div>
<div class="t" style="left:667px;top:404px;text-align:left;color:#333"><span style="display:inline-block;transform:scaleX(0.91);transform-origin:0 0">1-31</span></div>
<div class="t" style="left:724px;top:404px;text-align:left;color:#222"><span style="display:inline-block;transform:scaleX(0.93);transform-origin:0 0">Медицинская сестра по физ...</span></div>
<div class="t" style="left:1134px;top:404px;text-align:left;color:#333"><span style="display:inline-block;transform:scaleX(0.91);transform-origin:0 0">2</span></div>
<div style="left:80px;top:422px;width:345px;height:37px;background:#dcdcdc"></div>
<div style="left:887px;top:422px;width:473px;height:37px;background:#dcdcdc"></div>
<div style="left:1360px;top:422px;width:300px;height:37px;background:#ffff00"></div>
<div style="left:19px;top:459px;width:1600px;height:1px;background:#e4e4e4"></div>
<div class="t" style="left:19px;top:423px;width:57px;text-align:right;color:#333"><span style="display:inline-block;transform:scaleX(0.91);transform-origin:100% 0">5</span></div>
<div class="t" style="left:84px;top:423px;width:338px;overflow:hidden;text-align:left;color:#7c8894;font-style:italic"><span style="display:inline-block;transform:scaleX(0.895);transform-origin:0 0">Корнева Ольга Гюльсаф Кызы (осн.) (ОМС) (1,00), 1,00</span></div>
<div class="t" style="left:84px;top:442px;text-align:left;color:#8a949e;font-style:italic"><span style="display:inline-block;transform:scaleX(0.895);transform-origin:0 0">КоличествоЯвок</span></div>
<div class="cb" style="left:430px;top:426px;width:13px;height:13px;"></div>
<svg style="position:absolute;left:430px;top:424px" width="15" height="14" viewBox="0 0 15 14"><path d="M1.6 8.2 L3.4 6.8 L6.4 10.2 L13.1 0.9 L14 1.5 L6.7 13.2 Z" fill="#17914a" stroke="#17914a" stroke-width=".5" stroke-linejoin="round"/></svg>
<div class="t" style="left:470px;top:423px;width:99px;text-align:right;color:#333"><span style="display:inline-block;transform:scaleX(0.91);transform-origin:100% 0">179,400</span></div>
<div class="t" style="left:667px;top:423px;text-align:left;color:#333"><span style="display:inline-block;transform:scaleX(0.91);transform-origin:0 0">1-31</span></div>
<div class="t" style="left:724px;top:423px;text-align:left;color:#222"><span style="display:inline-block;transform:scaleX(0.945);transform-origin:0 0">Физиотерапевтическое отде...</span></div>
<div class="t" style="left:724px;top:442px;width:160px;overflow:hidden;text-align:left;color:#7c8894;font-style:italic"><span style="display:inline-block;transform:scaleX(0.87);transform-origin:0 0">Старшая медицинская сестра</span></div>
<div class="t" style="left:891px;top:423px;text-align:left;color:#7c8894;font-style:italic"><span style="display:inline-block;transform:scaleX(0.91);transform-origin:0 0">P</span></div>
<div class="t" style="left:921px;top:423px;text-align:left;color:#7c8894;font-style:italic"><span style="display:inline-block;transform:scaleX(0.91);transform-origin:0 0">P</span></div>
<div class="t" style="left:948px;top:423px;text-align:left;color:#7c8894;font-style:italic"><span style="display:inline-block;transform:scaleX(0.91);transform-origin:0 0">P</span></div>
<div class="t" style="left:979px;top:423px;text-align:left;color:#7c8894;font-style:italic"><span style="display:inline-block;transform:scaleX(0.91);transform-origin:0 0">P</span></div>
<div class="t" style="left:1012px;top:423px;text-align:left;color:#7c8894;font-style:italic"><span style="display:inline-block;transform:scaleX(0.91);transform-origin:0 0">P</span></div>
<div class="t" style="left:1042px;top:423px;text-align:left;color:#7c8894;font-style:italic"><span style="display:inline-block;transform:scaleX(0.91);transform-origin:0 0">P</span></div>
<div class="t" style="left:1073px;top:423px;text-align:left;color:#7c8894;font-style:italic"><span style="display:inline-block;transform:scaleX(0.91);transform-origin:0 0">P</span></div>
<div class="t" style="left:1104px;top:423px;text-align:left;color:#7c8894;font-style:italic"><span style="display:inline-block;transform:scaleX(0.91);transform-origin:0 0">P</span></div>
<div class="t" style="left:1134px;top:423px;text-align:left;color:#7c8894;font-style:italic"><span style="display:inline-block;transform:scaleX(0.91);transform-origin:0 0">P</span></div>
<div class="t" style="left:1162px;top:423px;text-align:left;color:#7c8894;font-style:italic"><span style="display:inline-block;transform:scaleX(0.91);transform-origin:0 0">P</span></div>
<div class="t" style="left:1195px;top:423px;text-align:left;color:#7c8894;font-style:italic"><span style="display:inline-block;transform:scaleX(0.91);transform-origin:0 0">P</span></div>
<div class="t" style="left:1229px;top:423px;text-align:left;color:#7c8894;font-style:italic"><span style="display:inline-block;transform:scaleX(0.91);transform-origin:0 0">P</span></div>
<div class="t" style="left:1259px;top:423px;text-align:left;color:#7c8894;font-style:italic"><span style="display:inline-block;transform:scaleX(0.91);transform-origin:0 0">P</span></div>
<div class="t" style="left:1292px;top:423px;text-align:left;color:#7c8894;font-style:italic"><span style="display:inline-block;transform:scaleX(0.91);transform-origin:0 0">P</span></div>
<div class="t" style="left:1328px;top:423px;text-align:left;color:#7c8894;font-style:italic"><span style="display:inline-block;transform:scaleX(0.91);transform-origin:0 0">P</span></div>
<div style="left:80px;top:460px;width:345px;height:37px;background:#dcdcdc"></div>
<div style="left:887px;top:460px;width:473px;height:37px;background:#dcdcdc"></div>
<div style="left:1360px;top:460px;width:300px;height:37px;background:#ffff00"></div>
<div style="left:19px;top:497px;width:1600px;height:1px;background:#e4e4e4"></div>
<div class="t" style="left:19px;top:461px;width:57px;text-align:right;color:#333"><span style="display:inline-block;transform:scaleX(0.91);transform-origin:100% 0">6</span></div>
<div class="t" style="left:84px;top:461px;width:338px;overflow:hidden;text-align:left;color:#222"><span style="display:inline-block;transform:scaleX(0.895);transform-origin:0 0">Кузьмина Наталья Геннадиевна (осн.) (ОМС) (1,00), 1,00</span></div>
<div class="t" style="left:84px;top:480px;text-align:left;color:#8a949e"><span style="display:inline-block;transform:scaleX(0.91);transform-origin:0 0">КоличествоЯвок</span></div>
<div class="cb" style="left:430px;top:464px;width:13px;height:13px;"></div>
<div class="t" style="left:470px;top:461px;width:99px;text-align:right;color:#333"><span style="display:inline-block;transform:scaleX(0.91);transform-origin:100% 0">179,400</span></div>
<div class="t" style="left:470px;top:480px;width:99px;text-align:right;color:#333"><span style="display:inline-block;transform:scaleX(0.91);transform-origin:100% 0">179,400</span></div>
<div class="t" style="left:575px;top:461px;width:83px;text-align:right;color:#222;font-weight:bold;font-size:12.5px">82,50</div>
<div class="t" style="left:667px;top:461px;text-align:left;color:#333"><span style="display:inline-block;transform:scaleX(0.91);transform-origin:0 0">1-31</span></div>
<div class="t" style="left:724px;top:461px;text-align:left;color:#222"><span style="display:inline-block;transform:scaleX(0.945);transform-origin:0 0">Физиотерапевтическое отде...</span></div>
<div class="t" style="left:724px;top:480px;width:160px;overflow:hidden;text-align:left;color:#222"><span style="display:inline-block;transform:scaleX(0.93);transform-origin:0 0">Медицинская сестра по физ...</span></div>
<div class="t" style="left:891px;top:461px;text-align:left;color:#333"><span style="display:inline-block;transform:scaleX(0.91);transform-origin:0 0">7,5</span></div>
<div class="t" style="left:921px;top:461px;text-align:left;color:#333"><span style="display:inline-block;transform:scaleX(0.91);transform-origin:0 0">7,5</span></div>
<div class="t" style="left:948px;top:461px;text-align:left;color:#333"><span style="display:inline-block;transform:scaleX(0.91);transform-origin:0 0">7,5</span></div>
<div class="t" style="left:979px;top:461px;text-align:left;color:#333"><span style="display:inline-block;transform:scaleX(0.91);transform-origin:0 0">7,5</span></div>
<div class="t" style="left:1012px;top:461px;text-align:left;color:#333"><span style="display:inline-block;transform:scaleX(0.91);transform-origin:0 0">7,5</span></div>
<div class="t" style="left:1042px;top:461px;text-align:left;color:#333"><span style="display:inline-block;transform:scaleX(0.91);transform-origin:0 0">В</span></div>
<div class="t" style="left:1073px;top:461px;text-align:left;color:#333"><span style="display:inline-block;transform:scaleX(0.91);transform-origin:0 0">В</span></div>
<div class="t" style="left:1104px;top:461px;text-align:left;color:#333"><span style="display:inline-block;transform:scaleX(0.91);transform-origin:0 0">7,5</span></div>
<div class="t" style="left:1134px;top:461px;text-align:left;color:#333"><span style="display:inline-block;transform:scaleX(0.91);transform-origin:0 0">7,5</span></div>
<div class="t" style="left:1162px;top:461px;text-align:left;color:#333"><span style="display:inline-block;transform:scaleX(0.91);transform-origin:0 0">7,5</span></div>
<div class="t" style="left:1195px;top:461px;text-align:left;color:#333"><span style="display:inline-block;transform:scaleX(0.91);transform-origin:0 0">7,5</span></div>
<div class="t" style="left:1229px;top:461px;text-align:left;color:#333"><span style="display:inline-block;transform:scaleX(0.91);transform-origin:0 0">7,5</span></div>
<div class="t" style="left:1259px;top:461px;text-align:left;color:#333"><span style="display:inline-block;transform:scaleX(0.91);transform-origin:0 0">В</span></div>
<div class="t" style="left:1292px;top:461px;text-align:left;color:#333"><span style="display:inline-block;transform:scaleX(0.91);transform-origin:0 0">В</span></div>
<div class="t" style="left:1328px;top:461px;text-align:left;color:#333"><span style="display:inline-block;transform:scaleX(0.91);transform-origin:0 0">7,5</span></div>
<div style="left:80px;top:498px;width:345px;height:37px;background:#dcdcdc"></div>
<div style="left:887px;top:498px;width:473px;height:37px;background:#dcdcdc"></div>
<div style="left:1360px;top:498px;width:300px;height:37px;background:#ffff00"></div>
<div style="left:19px;top:535px;width:1600px;height:1px;background:#e4e4e4"></div>
<div class="t" style="left:19px;top:499px;width:57px;text-align:right;color:#333"><span style="display:inline-block;transform:scaleX(0.91);transform-origin:100% 0">7</span></div>
<div class="t" style="left:84px;top:499px;width:338px;overflow:hidden;text-align:left;color:#222"><span style="display:inline-block;transform:scaleX(0.895);transform-origin:0 0">Легалина Татьяна Ивановна (осн.) (ОМС) (1,00), 1,00</span></div>
<div class="t" style="left:84px;top:518px;text-align:left;color:#8a949e"><span style="display:inline-block;transform:scaleX(0.91);transform-origin:0 0">КоличествоЯвок</span></div>
<div class="cb" style="left:430px;top:502px;width:13px;height:13px;"></div>
<div class="t" style="left:470px;top:499px;width:99px;text-align:right;color:#333"><span style="display:inline-block;transform:scaleX(0.91);transform-origin:100% 0">179,400</span></div>
<div class="t" style="left:470px;top:518px;width:99px;text-align:right;color:#333"><span style="display:inline-block;transform:scaleX(0.91);transform-origin:100% 0">101,400</span></div>
<div class="t" style="left:575px;top:499px;width:83px;text-align:right;color:#222;font-weight:bold;font-size:12.5px">82,50</div>
<div class="t" style="left:667px;top:499px;text-align:left;color:#333"><span style="display:inline-block;transform:scaleX(0.91);transform-origin:0 0">1-31</span></div>
<div class="t" style="left:724px;top:499px;text-align:left;color:#222"><span style="display:inline-block;transform:scaleX(0.945);transform-origin:0 0">Физиотерапевтическое отде...</span></div>
<div class="t" style="left:724px;top:518px;width:160px;overflow:hidden;text-align:left;color:#222"><span style="display:inline-block;transform:scaleX(0.91);transform-origin:0 0">Врач-рефлексотерапевт</span></div>
<div class="t" style="left:891px;top:499px;text-align:left;color:#333"><span style="display:inline-block;transform:scaleX(0.91);transform-origin:0 0">7,5</span></div>
<div class="t" style="left:921px;top:499px;text-align:left;color:#333"><span style="display:inline-block;transform:scaleX(0.91);transform-origin:0 0">7,5</span></div>
<div class="t" style="left:948px;top:499px;text-align:left;color:#333"><span style="display:inline-block;transform:scaleX(0.91);transform-origin:0 0">7,5</span></div>
<div class="t" style="left:979px;top:499px;text-align:left;color:#333"><span style="display:inline-block;transform:scaleX(0.91);transform-origin:0 0">7,5</span></div>
<div class="t" style="left:1012px;top:499px;text-align:left;color:#333"><span style="display:inline-block;transform:scaleX(0.91);transform-origin:0 0">7,5</span></div>
<div class="t" style="left:1042px;top:499px;text-align:left;color:#333"><span style="display:inline-block;transform:scaleX(0.91);transform-origin:0 0">В</span></div>
<div class="t" style="left:1073px;top:499px;text-align:left;color:#333"><span style="display:inline-block;transform:scaleX(0.91);transform-origin:0 0">В</span></div>
<div class="t" style="left:1104px;top:499px;text-align:left;color:#333"><span style="display:inline-block;transform:scaleX(0.91);transform-origin:0 0">7,5</span></div>
<div class="t" style="left:1134px;top:499px;text-align:left;color:#333"><span style="display:inline-block;transform:scaleX(0.91);transform-origin:0 0">7,5</span></div>
<div class="t" style="left:1162px;top:499px;text-align:left;color:#333"><span style="display:inline-block;transform:scaleX(0.91);transform-origin:0 0">7,5</span></div>
<div class="t" style="left:1195px;top:499px;text-align:left;color:#333"><span style="display:inline-block;transform:scaleX(0.91);transform-origin:0 0">7,5</span></div>
<div class="t" style="left:1229px;top:499px;text-align:left;color:#333"><span style="display:inline-block;transform:scaleX(0.91);transform-origin:0 0">7,5</span></div>
<div class="t" style="left:1259px;top:499px;text-align:left;color:#333"><span style="display:inline-block;transform:scaleX(0.91);transform-origin:0 0">В</span></div>
<div class="t" style="left:1292px;top:499px;text-align:left;color:#333"><span style="display:inline-block;transform:scaleX(0.91);transform-origin:0 0">В</span></div>
<div class="t" style="left:1328px;top:499px;text-align:left;color:#333"><span style="display:inline-block;transform:scaleX(0.91);transform-origin:0 0">7,5</span></div>
<div style="left:80px;top:536px;width:345px;height:37px;background:#dcdcdc"></div>
<div style="left:887px;top:536px;width:473px;height:37px;background:#dcdcdc"></div>
<div style="left:1360px;top:536px;width:300px;height:37px;background:#ffff00"></div>
<div style="left:19px;top:573px;width:1600px;height:1px;background:#e4e4e4"></div>
<div class="t" style="left:19px;top:537px;width:57px;text-align:right;color:#333"><span style="display:inline-block;transform:scaleX(0.91);transform-origin:100% 0">8</span></div>
<div class="t" style="left:84px;top:537px;width:338px;overflow:hidden;text-align:left;color:#222"><span style="display:inline-block;transform:scaleX(0.895);transform-origin:0 0">ОБРАЗЦОВА ОЛЕСЯ ВЯЧЕСЛАВОВНА (осн.) (ОМС) (1,00), 1,00</span></div>
<div class="t" style="left:84px;top:556px;text-align:left;color:#8a949e"><span style="display:inline-block;transform:scaleX(0.91);transform-origin:0 0">КоличествоЯвок</span></div>
<div class="cb" style="left:430px;top:540px;width:13px;height:13px;"></div>
<div class="t" style="left:470px;top:537px;width:99px;text-align:right;color:#333"><span style="display:inline-block;transform:scaleX(0.91);transform-origin:100% 0">179,400</span></div>
<div class="t" style="left:470px;top:556px;width:99px;text-align:right;color:#333"><span style="display:inline-block;transform:scaleX(0.91);transform-origin:100% 0">179,400</span></div>
<div class="t" style="left:575px;top:537px;width:83px;text-align:right;color:#222;font-weight:bold;font-size:12.5px">87,90</div>
<div class="t" style="left:667px;top:537px;text-align:left;color:#333"><span style="display:inline-block;transform:scaleX(0.91);transform-origin:0 0">1-31</span></div>
<div class="t" style="left:724px;top:537px;text-align:left;color:#222"><span style="display:inline-block;transform:scaleX(0.945);transform-origin:0 0">Физиотерапевтическое отде...</span></div>
<div class="t" style="left:724px;top:556px;width:160px;overflow:hidden;text-align:left;color:#222"><span style="display:inline-block;transform:scaleX(0.91);transform-origin:0 0">Старшая медицинская сестра</span></div>
<div class="t" style="left:891px;top:537px;text-align:left;color:#333"><span style="display:inline-block;transform:scaleX(0.91);transform-origin:0 0">7,5</span></div>
<div class="t" style="left:921px;top:537px;text-align:left;color:#333"><span style="display:inline-block;transform:scaleX(0.91);transform-origin:0 0">7,5</span></div>
<div class="t" style="left:948px;top:537px;text-align:left;color:#333"><span style="display:inline-block;transform:scaleX(0.91);transform-origin:0 0">7,5</span></div>
<div class="t" style="left:979px;top:537px;text-align:left;color:#333"><span style="display:inline-block;transform:scaleX(0.91);transform-origin:0 0">7,5</span></div>
<div class="t" style="left:1012px;top:537px;text-align:left;color:#333"><span style="display:inline-block;transform:scaleX(0.91);transform-origin:0 0">7,5</span></div>
<div class="t" style="left:1042px;top:537px;text-align:left;color:#333"><span style="display:inline-block;transform:scaleX(0.91);transform-origin:0 0">В</span></div>
<div class="t" style="left:1073px;top:537px;text-align:left;color:#333"><span style="display:inline-block;transform:scaleX(0.91);transform-origin:0 0">В</span></div>
<div class="t" style="left:1104px;top:537px;text-align:left;color:#333"><span style="display:inline-block;transform:scaleX(0.91);transform-origin:0 0">7,5</span></div>
<div class="t" style="left:1134px;top:537px;text-align:left;color:#333"><span style="display:inline-block;transform:scaleX(0.91);transform-origin:0 0">7,5</span></div>
<div class="t" style="left:1162px;top:537px;text-align:left;color:#333"><span style="display:inline-block;transform:scaleX(0.91);transform-origin:0 0">7,5</span></div>
<div class="t" style="left:1195px;top:537px;text-align:left;color:#333"><span style="display:inline-block;transform:scaleX(0.91);transform-origin:0 0">7,5</span></div>
<div class="t" style="left:1229px;top:537px;text-align:left;color:#333"><span style="display:inline-block;transform:scaleX(0.91);transform-origin:0 0">7,5</span></div>
<div class="t" style="left:1259px;top:537px;text-align:left;color:#333"><span style="display:inline-block;transform:scaleX(0.91);transform-origin:0 0">5,4</span></div>
<div class="t" style="left:1292px;top:537px;text-align:left;color:#333"><span style="display:inline-block;transform:scaleX(0.91);transform-origin:0 0">В</span></div>
<div class="t" style="left:1328px;top:537px;text-align:left;color:#333"><span style="display:inline-block;transform:scaleX(0.91);transform-origin:0 0">7,5</span></div>
<div style="left:80px;top:574px;width:345px;height:37px;background:#dcdcdc"></div>
<div style="left:887px;top:574px;width:473px;height:37px;background:#dcdcdc"></div>
<div style="left:1360px;top:574px;width:300px;height:37px;background:#ffff00"></div>
<div style="left:19px;top:611px;width:1600px;height:1px;background:#e4e4e4"></div>
<div class="t" style="left:19px;top:575px;width:57px;text-align:right;color:#333"><span style="display:inline-block;transform:scaleX(0.91);transform-origin:100% 0">9</span></div>
<div class="t" style="left:84px;top:575px;width:338px;overflow:hidden;text-align:left;color:#222"><span style="display:inline-block;transform:scaleX(0.895);transform-origin:0 0">ОБРАЗЦОВА ОЛЕСЯ ВЯЧЕСЛАВОВНА (вн. совм.) (ОМС) (0,50), ...</span></div>
<div class="t" style="left:84px;top:594px;text-align:left;color:#8a949e"><span style="display:inline-block;transform:scaleX(0.91);transform-origin:0 0">КоличествоЯвок</span></div>
<div class="cb" style="left:430px;top:578px;width:13px;height:13px;"></div>
<div class="t" style="left:470px;top:575px;width:99px;text-align:right;color:#333"><span style="display:inline-block;transform:scaleX(0.91);transform-origin:100% 0">89,700</span></div>
<div class="t" style="left:470px;top:594px;width:99px;text-align:right;color:#333"><span style="display:inline-block;transform:scaleX(0.91);transform-origin:100% 0">89,700</span></div>
<div class="t" style="left:575px;top:575px;width:83px;text-align:right;color:#222;font-weight:bold;font-size:12.5px">42,90</div>
<div class="t" style="left:667px;top:575px;text-align:left;color:#333"><span style="display:inline-block;transform:scaleX(0.91);transform-origin:0 0">1-31</span></div>
<div class="t" style="left:724px;top:575px;text-align:left;color:#222"><span style="display:inline-block;transform:scaleX(0.945);transform-origin:0 0">Физиотерапевтическое отде...</span></div>
<div class="t" style="left:724px;top:594px;width:160px;overflow:hidden;text-align:left;color:#222"><span style="display:inline-block;transform:scaleX(0.93);transform-origin:0 0">Медицинская сестра по мас...</span></div>
<div class="t" style="left:891px;top:575px;text-align:left;color:#333"><span style="display:inline-block;transform:scaleX(0.91);transform-origin:0 0">3,9</span></div>
<div class="t" style="left:921px;top:575px;text-align:left;color:#333"><span style="display:inline-block;transform:scaleX(0.91);transform-origin:0 0">3,9</span></div>
<div class="t" style="left:948px;top:575px;text-align:left;color:#333"><span style="display:inline-block;transform:scaleX(0.91);transform-origin:0 0">3,9</span></div>
<div class="t" style="left:979px;top:575px;text-align:left;color:#333"><span style="display:inline-block;transform:scaleX(0.91);transform-origin:0 0">3,9</span></div>
<div class="t" style="left:1012px;top:575px;text-align:left;color:#333"><span style="display:inline-block;transform:scaleX(0.91);transform-origin:0 0">3,9</span></div>
<div class="t" style="left:1042px;top:575px;text-align:left;color:#333"><span style="display:inline-block;transform:scaleX(0.91);transform-origin:0 0">В</span></div>
<div class="t" style="left:1073px;top:575px;text-align:left;color:#333"><span style="display:inline-block;transform:scaleX(0.91);transform-origin:0 0">В</span></div>
<div class="t" style="left:1104px;top:575px;text-align:left;color:#333"><span style="display:inline-block;transform:scaleX(0.91);transform-origin:0 0">3,9</span></div>
<div class="t" style="left:1134px;top:575px;text-align:left;color:#333"><span style="display:inline-block;transform:scaleX(0.91);transform-origin:0 0">3,9</span></div>
<div class="t" style="left:1162px;top:575px;text-align:left;color:#333"><span style="display:inline-block;transform:scaleX(0.91);transform-origin:0 0">3,9</span></div>
<div class="t" style="left:1195px;top:575px;text-align:left;color:#333"><span style="display:inline-block;transform:scaleX(0.91);transform-origin:0 0">3,9</span></div>
<div class="t" style="left:1229px;top:575px;text-align:left;color:#333"><span style="display:inline-block;transform:scaleX(0.91);transform-origin:0 0">3,9</span></div>
<div class="t" style="left:1259px;top:575px;text-align:left;color:#333"><span style="display:inline-block;transform:scaleX(0.91);transform-origin:0 0">В</span></div>
<div class="t" style="left:1292px;top:575px;text-align:left;color:#333"><span style="display:inline-block;transform:scaleX(0.91);transform-origin:0 0">В</span></div>
<div class="t" style="left:1328px;top:575px;text-align:left;color:#333"><span style="display:inline-block;transform:scaleX(0.91);transform-origin:0 0">3,9</span></div>
<div style="left:80px;top:612px;width:345px;height:37px;background:#dcdcdc"></div>
<div style="left:887px;top:612px;width:473px;height:37px;background:#dcdcdc"></div>
<div style="left:1360px;top:612px;width:300px;height:37px;background:#ffff00"></div>
<div style="left:19px;top:649px;width:1600px;height:1px;background:#e4e4e4"></div>
<div class="t" style="left:19px;top:613px;width:57px;text-align:right;color:#333"><span style="display:inline-block;transform:scaleX(0.91);transform-origin:100% 0">10</span></div>
<div class="t" style="left:84px;top:613px;width:338px;overflow:hidden;text-align:left;color:#222"><span style="display:inline-block;transform:scaleX(0.895);transform-origin:0 0">Опарина Ольга Андреевна (осн.) (ОМС) (1,00), 1,00</span></div>
<div class="t" style="left:84px;top:632px;text-align:left;color:#8a949e"><span style="display:inline-block;transform:scaleX(0.91);transform-origin:0 0">КоличествоЯвок</span></div>
<div class="cb" style="left:430px;top:616px;width:13px;height:13px;"></div>
<div class="t" style="left:470px;top:613px;width:99px;text-align:right;color:#333"><span style="display:inline-block;transform:scaleX(0.91);transform-origin:100% 0">179,400</span></div>
<div class="t" style="left:470px;top:632px;width:99px;text-align:right;color:#333"><span style="display:inline-block;transform:scaleX(0.91);transform-origin:100% 0">124,800</span></div>
<div class="t" style="left:575px;top:613px;width:83px;text-align:right;color:#222;font-weight:bold;font-size:12.5px">30,00</div>
<div class="t" style="left:667px;top:613px;text-align:left;color:#333"><span style="display:inline-block;transform:scaleX(0.91);transform-origin:0 0">1-31</span></div>
<div class="t" style="left:724px;top:613px;text-align:left;color:#222"><span style="display:inline-block;transform:scaleX(0.945);transform-origin:0 0">Физиотерапевтическое отде...</span></div>
<div class="t" style="left:724px;top:632px;width:160px;overflow:hidden;text-align:left;color:#222"><span style="display:inline-block;transform:scaleX(0.93);transform-origin:0 0">Медицинская сестра по физ...</span></div>
<div class="t" style="left:891px;top:613px;text-align:left;color:#333"><span style="display:inline-block;transform:scaleX(0.91);transform-origin:0 0">О</span></div>
<div class="t" style="left:921px;top:613px;text-align:left;color:#333"><span style="display:inline-block;transform:scaleX(0.91);transform-origin:0 0">О</span></div>
<div class="t" style="left:948px;top:613px;text-align:left;color:#333"><span style="display:inline-block;transform:scaleX(0.91);transform-origin:0 0">7,5</span></div>
<div class="t" style="left:979px;top:613px;text-align:left;color:#333"><span style="display:inline-block;transform:scaleX(0.91);transform-origin:0 0">7,5</span></div>
<div class="t" style="left:1012px;top:613px;text-align:left;color:#333"><span style="display:inline-block;transform:scaleX(0.91);transform-origin:0 0">7,5</span></div>
<div class="t" style="left:1042px;top:613px;text-align:left;color:#333"><span style="display:inline-block;transform:scaleX(0.91);transform-origin:0 0">В</span></div>
<div class="t" style="left:1073px;top:613px;text-align:left;color:#333"><span style="display:inline-block;transform:scaleX(0.91);transform-origin:0 0">В</span></div>
<div class="t" style="left:1104px;top:613px;text-align:left;color:#333"><span style="display:inline-block;transform:scaleX(0.91);transform-origin:0 0">ОУ</span></div>
<div class="t" style="left:1134px;top:613px;text-align:left;color:#333"><span style="display:inline-block;transform:scaleX(0.91);transform-origin:0 0">ОУ</span></div>
<div class="t" style="left:1162px;top:613px;text-align:left;color:#333"><span style="display:inline-block;transform:scaleX(0.91);transform-origin:0 0">ОУ</span></div>
<div class="t" style="left:1195px;top:613px;text-align:left;color:#333"><span style="display:inline-block;transform:scaleX(0.91);transform-origin:0 0">ОУ</span></div>
<div class="t" style="left:1229px;top:613px;text-align:left;color:#333"><span style="display:inline-block;transform:scaleX(0.91);transform-origin:0 0">ОУ</span></div>
<div class="t" style="left:1259px;top:613px;text-align:left;color:#333"><span style="display:inline-block;transform:scaleX(0.91);transform-origin:0 0">В</span></div>
<div class="t" style="left:1292px;top:613px;text-align:left;color:#333"><span style="display:inline-block;transform:scaleX(0.91);transform-origin:0 0">В</span></div>
<div class="t" style="left:1328px;top:613px;text-align:left;color:#333"><span style="display:inline-block;transform:scaleX(0.91);transform-origin:0 0">7,5</span></div>
<div style="left:80px;top:650px;width:345px;height:37px;background:#dcdcdc"></div>
<div style="left:887px;top:650px;width:473px;height:37px;background:#dcdcdc"></div>
<div style="left:1360px;top:650px;width:300px;height:37px;background:#ffff00"></div>
<div style="left:19px;top:687px;width:1600px;height:1px;background:#e4e4e4"></div>
<div class="t" style="left:19px;top:651px;width:57px;text-align:right;color:#333"><span style="display:inline-block;transform:scaleX(0.91);transform-origin:100% 0">11</span></div>
<div class="t" style="left:84px;top:651px;width:338px;overflow:hidden;text-align:left;color:#222"><span style="display:inline-block;transform:scaleX(0.895);transform-origin:0 0">Сахарова Светлана Николаевна (осн.) (ОМС) (1,00), 1,00</span></div>
<div class="t" style="left:84px;top:670px;text-align:left;color:#8a949e"><span style="display:inline-block;transform:scaleX(0.91);transform-origin:0 0">КоличествоЯвок</span></div>
<div class="cb" style="left:430px;top:654px;width:13px;height:13px;"></div>
<div class="t" style="left:470px;top:651px;width:99px;text-align:right;color:#333"><span style="display:inline-block;transform:scaleX(0.91);transform-origin:100% 0">179,400</span></div>
<div class="t" style="left:470px;top:670px;width:99px;text-align:right;color:#333"><span style="display:inline-block;transform:scaleX(0.91);transform-origin:100% 0">179,400</span></div>
<div class="t" style="left:575px;top:651px;width:83px;text-align:right;color:#222;font-weight:bold;font-size:12.5px">89,40</div>
<div class="t" style="left:667px;top:651px;text-align:left;color:#333"><span style="display:inline-block;transform:scaleX(0.91);transform-origin:0 0">1-31</span></div>
<div class="t" style="left:724px;top:651px;text-align:left;color:#222"><span style="display:inline-block;transform:scaleX(0.945);transform-origin:0 0">Физиотерапевтическое отде...</span></div>
<div class="t" style="left:724px;top:670px;width:160px;overflow:hidden;text-align:left;color:#222"><span style="display:inline-block;transform:scaleX(0.93);transform-origin:0 0">Медицинская сестра по физ...</span></div>
<div class="t" style="left:891px;top:651px;text-align:left;color:#333"><span style="display:inline-block;transform:scaleX(0.91);transform-origin:0 0">7,5</span></div>
<div class="t" style="left:921px;top:651px;text-align:left;color:#333"><span style="display:inline-block;transform:scaleX(0.91);transform-origin:0 0">7,5</span></div>
<div class="t" style="left:948px;top:651px;text-align:left;color:#333"><span style="display:inline-block;transform:scaleX(0.91);transform-origin:0 0">7,5</span></div>
<div class="t" style="left:979px;top:651px;text-align:left;color:#333"><span style="display:inline-block;transform:scaleX(0.91);transform-origin:0 0">7,5</span></div>
<div class="t" style="left:1012px;top:651px;text-align:left;color:#333"><span style="display:inline-block;transform:scaleX(0.91);transform-origin:0 0">7,5</span></div>
<div class="t" style="left:1042px;top:651px;text-align:left;color:#333"><span style="display:inline-block;transform:scaleX(0.91);transform-origin:0 0">В</span></div>
<div class="t" style="left:1073px;top:651px;text-align:left;color:#333"><span style="display:inline-block;transform:scaleX(0.91);transform-origin:0 0">В</span></div>
<div class="t" style="left:1104px;top:651px;text-align:left;color:#333"><span style="display:inline-block;transform:scaleX(0.91);transform-origin:0 0">7,5</span></div>
<div class="t" style="left:1134px;top:651px;text-align:left;color:#333"><span style="display:inline-block;transform:scaleX(0.91);transform-origin:0 0">7,5</span></div>
<div class="t" style="left:1162px;top:651px;text-align:left;color:#333"><span style="display:inline-block;transform:scaleX(0.91);transform-origin:0 0">7,5</span></div>
<div class="t" style="left:1195px;top:651px;text-align:left;color:#333"><span style="display:inline-block;transform:scaleX(0.91);transform-origin:0 0">7,5</span></div>
<div class="t" style="left:1229px;top:651px;text-align:left;color:#333"><span style="display:inline-block;transform:scaleX(0.91);transform-origin:0 0">7,5</span></div>
<div class="t" style="left:1259px;top:651px;text-align:left;color:#333"><span style="display:inline-block;transform:scaleX(0.91);transform-origin:0 0">6,9</span></div>
<div class="t" style="left:1292px;top:651px;text-align:left;color:#333"><span style="display:inline-block;transform:scaleX(0.91);transform-origin:0 0">В</span></div>
<div class="t" style="left:1328px;top:651px;text-align:left;color:#333"><span style="display:inline-block;transform:scaleX(0.91);transform-origin:0 0">7,5</span></div>
<div style="left:80px;top:688px;width:345px;height:37px;background:#dcdcdc"></div>
<div style="left:887px;top:688px;width:473px;height:37px;background:#dcdcdc"></div>
<div style="left:1360px;top:688px;width:300px;height:37px;background:#ffff00"></div>
<div style="left:19px;top:725px;width:1600px;height:1px;background:#e4e4e4"></div>
<div class="t" style="left:19px;top:689px;width:57px;text-align:right;color:#333"><span style="display:inline-block;transform:scaleX(0.91);transform-origin:100% 0">12</span></div>
<div class="t" style="left:84px;top:689px;width:338px;overflow:hidden;text-align:left;color:#222"><span style="display:inline-block;transform:scaleX(0.895);transform-origin:0 0">Смолянская Марина Вячеславовна (осн.) (ОМС) (1,00), 1,00</span></div>
<div class="t" style="left:84px;top:708px;text-align:left;color:#8a949e"><span style="display:inline-block;transform:scaleX(0.91);transform-origin:0 0">КоличествоЯвок</span></div>
<div class="cb" style="left:430px;top:692px;width:13px;height:13px;"></div>
<div class="t" style="left:470px;top:689px;width:99px;text-align:right;color:#333"><span style="display:inline-block;transform:scaleX(0.91);transform-origin:100% 0">184,000</span></div>
<div class="t" style="left:470px;top:708px;width:99px;text-align:right;color:#333"><span style="display:inline-block;transform:scaleX(0.91);transform-origin:100% 0">184,000</span></div>
<div class="t" style="left:575px;top:689px;width:83px;text-align:right;color:#222;font-weight:bold;font-size:12.5px">84,70</div>
<div class="t" style="left:667px;top:689px;text-align:left;color:#333"><span style="display:inline-block;transform:scaleX(0.91);transform-origin:0 0">1-31</span></div>
<div class="t" style="left:724px;top:689px;text-align:left;color:#222"><span style="display:inline-block;transform:scaleX(0.945);transform-origin:0 0">Физиотерапевтическое отде...</span></div>
<div class="t" style="left:724px;top:708px;width:160px;overflow:hidden;text-align:left;color:#222"><span style="display:inline-block;transform:scaleX(0.93);transform-origin:0 0">Уборщик служебных помещ...</span></div>
<div class="t" style="left:891px;top:689px;text-align:left;color:#333"><span style="display:inline-block;transform:scaleX(0.91);transform-origin:0 0">7,7</span></div>
<div class="t" style="left:921px;top:689px;text-align:left;color:#333"><span style="display:inline-block;transform:scaleX(0.91);transform-origin:0 0">7,7</span></div>
<div class="t" style="left:948px;top:689px;text-align:left;color:#333"><span style="display:inline-block;transform:scaleX(0.91);transform-origin:0 0">7,7</span></div>
<div class="t" style="left:979px;top:689px;text-align:left;color:#333"><span style="display:inline-block;transform:scaleX(0.91);transform-origin:0 0">7,7</span></div>
<div class="t" style="left:1012px;top:689px;text-align:left;color:#333"><span style="display:inline-block;transform:scaleX(0.91);transform-origin:0 0">7,7</span></div>
<div class="t" style="left:1042px;top:689px;text-align:left;color:#333"><span style="display:inline-block;transform:scaleX(0.91);transform-origin:0 0">В</span></div>
<div class="t" style="left:1073px;top:689px;text-align:left;color:#333"><span style="display:inline-block;transform:scaleX(0.91);transform-origin:0 0">В</span></div>
<div class="t" style="left:1104px;top:689px;text-align:left;color:#333"><span style="display:inline-block;transform:scaleX(0.91);transform-origin:0 0">7,7</span></div>
<div class="t" style="left:1134px;top:689px;text-align:left;color:#333"><span style="display:inline-block;transform:scaleX(0.91);transform-origin:0 0">7,7</span></div>
<div class="t" style="left:1162px;top:689px;text-align:left;color:#333"><span style="display:inline-block;transform:scaleX(0.91);transform-origin:0 0">7,7</span></div>
<div class="t" style="left:1195px;top:689px;text-align:left;color:#333"><span style="display:inline-block;transform:scaleX(0.91);transform-origin:0 0">7,7</span></div>
<div class="t" style="left:1229px;top:689px;text-align:left;color:#333"><span style="display:inline-block;transform:scaleX(0.91);transform-origin:0 0">7,7</span></div>
<div class="t" style="left:1259px;top:689px;text-align:left;color:#333"><span style="display:inline-block;transform:scaleX(0.91);transform-origin:0 0">В</span></div>
<div class="t" style="left:1292px;top:689px;text-align:left;color:#333"><span style="display:inline-block;transform:scaleX(0.91);transform-origin:0 0">В</span></div>
<div class="t" style="left:1328px;top:689px;text-align:left;color:#333"><span style="display:inline-block;transform:scaleX(0.91);transform-origin:0 0">7,7</span></div>
<div style="left:80px;top:726px;width:345px;height:37px;background:#dcdcdc"></div>
<div style="left:887px;top:726px;width:473px;height:37px;background:#dcdcdc"></div>
<div style="left:1360px;top:726px;width:300px;height:37px;background:#ffff00"></div>
<div style="left:19px;top:763px;width:1600px;height:1px;background:#e4e4e4"></div>
<div class="t" style="left:19px;top:727px;width:57px;text-align:right;color:#333"><span style="display:inline-block;transform:scaleX(0.91);transform-origin:100% 0">13</span></div>
<div class="t" style="left:84px;top:727px;width:338px;overflow:hidden;text-align:left;color:#222"><span style="display:inline-block;transform:scaleX(0.895);transform-origin:0 0">Шляхтурова Валентина Васильевна (осн.) (ОМС) (1,00), 1,00</span></div>
<div class="t" style="left:84px;top:746px;text-align:left;color:#8a949e"><span style="display:inline-block;transform:scaleX(0.91);transform-origin:0 0">КоличествоЯвок</span></div>
<div class="cb" style="left:430px;top:730px;width:13px;height:13px;"></div>
<div class="t" style="left:470px;top:727px;width:99px;text-align:right;color:#333"><span style="display:inline-block;transform:scaleX(0.91);transform-origin:100% 0">179,400</span></div>
<div class="t" style="left:470px;top:746px;width:99px;text-align:right;color:#333"><span style="display:inline-block;transform:scaleX(0.91);transform-origin:100% 0">163,800</span></div>
<div class="t" style="left:575px;top:727px;width:83px;text-align:right;color:#222;font-weight:bold;font-size:12.5px">73,80</div>
<div class="t" style="left:667px;top:727px;text-align:left;color:#333"><span style="display:inline-block;transform:scaleX(0.91);transform-origin:0 0">1-31</span></div>
<div class="t" style="left:724px;top:727px;text-align:left;color:#222"><span style="display:inline-block;transform:scaleX(0.945);transform-origin:0 0">Физиотерапевтическое отде...</span></div>
<div class="t" style="left:724px;top:746px;width:160px;overflow:hidden;text-align:left;color:#222"><span style="display:inline-block;transform:scaleX(0.93);transform-origin:0 0">Медицинская сестра по физ...</span></div>
<div class="t" style="left:891px;top:727px;text-align:left;color:#333"><span style="display:inline-block;transform:scaleX(0.91);transform-origin:0 0">О</span></div>
<div class="t" style="left:921px;top:727px;text-align:left;color:#333"><span style="display:inline-block;transform:scaleX(0.91);transform-origin:0 0">О</span></div>
<div class="t" style="left:948px;top:727px;text-align:left;color:#333"><span style="display:inline-block;transform:scaleX(0.91);transform-origin:0 0">7,5</span></div>
<div class="t" style="left:979px;top:727px;text-align:left;color:#333"><span style="display:inline-block;transform:scaleX(0.91);transform-origin:0 0">7,5</span></div>
<div class="t" style="left:1012px;top:727px;text-align:left;color:#333"><span style="display:inline-block;transform:scaleX(0.91);transform-origin:0 0">7,5</span></div>
<div class="t" style="left:1042px;top:727px;text-align:left;color:#333"><span style="display:inline-block;transform:scaleX(0.91);transform-origin:0 0">6,3</span></div>
<div class="t" style="left:1073px;top:727px;text-align:left;color:#333"><span style="display:inline-block;transform:scaleX(0.91);transform-origin:0 0">В</span></div>
<div class="t" style="left:1104px;top:727px;text-align:left;color:#333"><span style="display:inline-block;transform:scaleX(0.91);transform-origin:0 0">7,5</span></div>
<div class="t" style="left:1134px;top:727px;text-align:left;color:#333"><span style="display:inline-block;transform:scaleX(0.91);transform-origin:0 0">7,5</span></div>
<div class="t" style="left:1162px;top:727px;text-align:left;color:#333"><span style="display:inline-block;transform:scaleX(0.91);transform-origin:0 0">7,5</span></div>
<div class="t" style="left:1195px;top:727px;text-align:left;color:#333"><span style="display:inline-block;transform:scaleX(0.91);transform-origin:0 0">7,5</span></div>
<div class="t" style="left:1229px;top:727px;text-align:left;color:#333"><span style="display:inline-block;transform:scaleX(0.91);transform-origin:0 0">7,5</span></div>
<div class="t" style="left:1259px;top:727px;text-align:left;color:#333"><span style="display:inline-block;transform:scaleX(0.91);transform-origin:0 0">В</span></div>
<div class="t" style="left:1292px;top:727px;text-align:left;color:#333"><span style="display:inline-block;transform:scaleX(0.91);transform-origin:0 0">В</span></div>
<div class="t" style="left:1328px;top:727px;text-align:left;color:#333"><span style="display:inline-block;transform:scaleX(0.91);transform-origin:0 0">7,5</span></div>
<div style="left:80px;top:764px;width:345px;height:37px;background:#dcdcdc"></div>
<div style="left:887px;top:764px;width:473px;height:37px;background:#dcdcdc"></div>
<div style="left:19px;top:801px;width:1600px;height:1px;background:#e4e4e4"></div>
<div class="t" style="left:19px;top:765px;width:57px;text-align:right;color:#333"><span style="display:inline-block;transform:scaleX(0.91);transform-origin:100% 0">14</span></div>
<div class="t" style="left:84px;top:765px;width:338px;overflow:hidden;text-align:left;color:#7c8894;font-style:italic"><span style="display:inline-block;transform:scaleX(0.895);transform-origin:0 0">Шляхтурова Валентина Васильевна (вн. совм.) (ОМС) (0,10), 0,10</span></div>
<div class="t" style="left:84px;top:784px;text-align:left;color:#8a949e;font-style:italic"><span style="display:inline-block;transform:scaleX(0.895);transform-origin:0 0">КоличествоЯвок</span></div>
<div class="cb" style="left:430px;top:768px;width:13px;height:13px;"></div>
<svg style="position:absolute;left:430px;top:766px" width="15" height="14" viewBox="0 0 15 14"><path d="M1.6 8.2 L3.4 6.8 L6.4 10.2 L13.1 0.9 L14 1.5 L6.7 13.2 Z" fill="#17914a" stroke="#17914a" stroke-width=".5" stroke-linejoin="round"/></svg>
<div class="t" style="left:470px;top:765px;width:99px;text-align:right;color:#333"><span style="display:inline-block;transform:scaleX(0.91);transform-origin:100% 0">17,940</span></div>
<div class="t" style="left:470px;top:784px;width:99px;text-align:right;color:#333"><span style="display:inline-block;transform:scaleX(0.91);transform-origin:100% 0">17,940</span></div>
<div class="t" style="left:667px;top:765px;text-align:left;color:#333"><span style="display:inline-block;transform:scaleX(0.91);transform-origin:0 0">1-31</span></div>
<div class="t" style="left:724px;top:765px;text-align:left;color:#222"><span style="display:inline-block;transform:scaleX(0.945);transform-origin:0 0">Физиотерапевтическое отде...</span></div>
<div class="t" style="left:724px;top:784px;width:160px;overflow:hidden;text-align:left;color:#7c8894;font-style:italic"><span style="display:inline-block;transform:scaleX(0.9);transform-origin:0 0">Медицинская сестра по физ...</span></div>
<div style="left:662px;top:289px;width:1px;height:513px;background:#c8c8c8"></div>
<div class="t" style="left:18px;top:915px;text-align:left;color:#12944a;font-size:13.5px"><span style="display:inline-block;transform:scaleX(0.94);transform-origin:0 0">Статус документа</span></div>
<div style="left:18px;top:936px;width:2px;height:54px;background:#149044"></div>
<div class="t" style="left:27px;top:938px;text-align:left;color:#444"><span style="display:inline-block;transform:scaleX(0.91);transform-origin:0 0">Текущий статус:</span></div>
<div class="inp" style="left:114px;top:937px;width:168px;height:20px;"></div>
<div class="t" style="left:117px;top:938px;text-align:left;color:#222"><span style="display:inline-block;transform:scaleX(0.91);transform-origin:0 0">Первая половина</span></div>
<div class="vl" style="left:260px;top:938px;width:1px;height:18px;"></div>
<div class="dd" style="left:268px;top:946px;width:0px;height:0px;"></div>
<div class="t" style="left:290px;top:938px;text-align:left;color:#222;font-weight:bold;font-size:12.5px">Закрыт</div>
<div class="btn" style="left:458px;top:936px;width:179px;height:21px;"></div>
<svg style="position:absolute;left:464px;top:940px" width="16" height="15" viewBox="0 0 16 15"><rect x=".5" y=".5" width="13" height="13" rx="1" fill="#fafcfe" stroke="#8a9aaa"/><rect x=".5" y=".5" width="13" height="2.5" fill="#2a88d8"/><path d="M2.5 5 H6 M2.5 7.5 H5 M2.5 10 H4" stroke="#b8c4d0" stroke-width=".7"/><path d="M4.2 11 L11.3 3.9 L13.6 6.2 L6.5 13.3 Z" fill="#44c050" stroke="#2a8a30" stroke-width=".5"/><path d="M11.3 3.9 L12.8 2.4 L15.1 4.7 L13.6 6.2 Z" fill="#4a5a68"/><path d="M4.2 11 L6.5 13.3 L3 14.5 Z" fill="#d8a858" stroke="#6a4a20" stroke-width=".4"/></svg>
<div class="t" style="left:485px;top:938px;text-align:left;color:#333"><span style="display:inline-block;transform:scaleX(0.91);transform-origin:0 0">Разрешить редактирование</span></div>
<div style="left:646px;top:936px;width:186px;height:26px;border:3px solid #ff0000;border-radius:3px"></div>
<div style="left:649px;top:939px;width:178px;height:16px;border:1px dotted #333;background:linear-gradient(#fff,#f0f0f0);box-shadow:1px 1px 0 #9a9a9a"></div>
<svg style="position:absolute;left:650px;top:940px" width="16" height="13" viewBox="0 0 16 13"><rect x=".5" y=".5" width="15" height="12" fill="#fffdf0" stroke="#e8c050"/><text x="2" y="7" font-family="Liberation Sans" font-size="7" fill="#4a7ad0">3</text><path d="M8 1 V12" stroke="#9aa" stroke-width=".8" stroke-dasharray="1 1"/><path d="M10 3 H14 M10 6 H14 M10 9 H14" stroke="#aab" stroke-width=".8"/></svg>
<div class="t" style="left:668px;top:939px;text-align:left;color:#222"><span style="display:inline-block;transform:scaleX(0.91);transform-origin:0 0">Управление блокированием</span></div>
<div class="dd" style="left:815px;top:947px;width:0px;height:0px;"></div>
<div class="t" style="left:600px;top:964px;width:720px;text-align:center;color:#f00;line-height:14px;font-size:11px">Первая половина месяца закрыта.</div>
<div class="t" style="left:600px;top:977px;width:720px;text-align:center;color:#f00;line-height:14px;font-size:11px">Данные за вторую половину месяца не закрыты! Необходимо завершить редактирование!</div>
<div class="t" style="left:18px;top:1004px;text-align:left;color:#444"><span style="display:inline-block;transform:scaleX(0.91);transform-origin:0 0">Комментарий:</span></div>
<div style="left:95px;top:1003px;width:1460px;height:20px;border:1px solid #a9a9a9;border-radius:3px;background:#fff"></div>
<div style="left:645px;top:851px;width:247px;height:85px;background:#fff;border:1px solid #a0a0a0;box-shadow:3px 3px 2px rgba(0,0,0,.4)"></div>
<div style="left:645px;top:853px;width:247px;height:29px;border:3px solid #ff0000;border-radius:3px"></div>
<div class="t" style="left:680px;top:858px;text-align:left;color:#333"><span style="display:inline-block;transform:scaleX(0.91);transform-origin:0 0">Разблокировать строку</span></div>
<div class="t" style="left:680px;top:884px;text-align:left;color:#333"><span style="display:inline-block;transform:scaleX(0.91);transform-origin:0 0">Заблокировать строку</span></div>
<div style="left:648px;top:906px;width:242px;height:1px;background:#d6cfb4"></div>
<div class="t" style="left:680px;top:913px;text-align:left;color:#333"><span style="display:inline-block;transform:scaleX(0.91);transform-origin:0 0">Снять/поставить блок подневно</span></div>
</body></html>
